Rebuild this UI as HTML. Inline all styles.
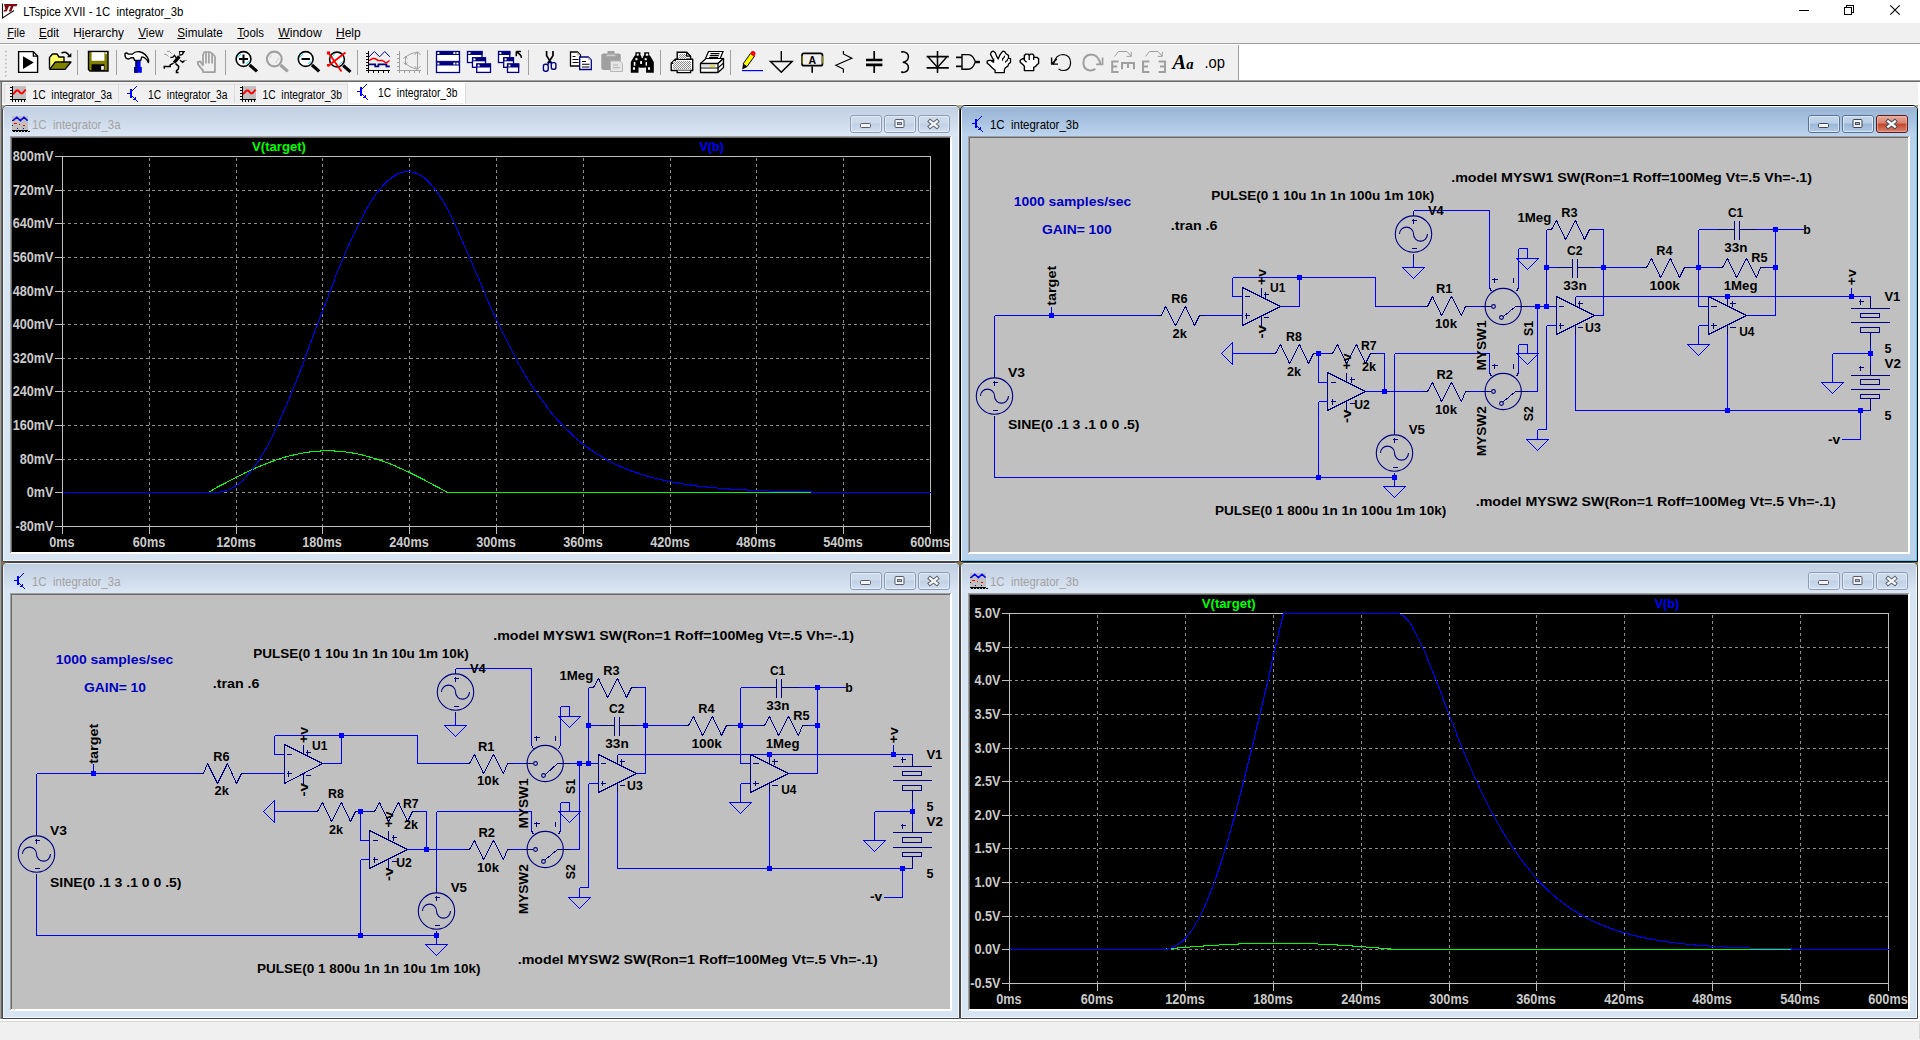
<!DOCTYPE html>
<html><head><meta charset="utf-8"><title>LTspice XVII - 1C integrator_3b</title><style>html,body{margin:0;padding:0;background:#f0f0f0;overflow:hidden}svg{display:block}</style></head><body><svg width="1920" height="1040" viewBox="0 0 1920 1040" font-family="'Liberation Sans', sans-serif">
<defs>
<linearGradient id="gtA" x1="0" y1="0" x2="0" y2="1"><stop offset="0" stop-color="#98b3d4"/><stop offset=".45" stop-color="#a6c0df"/><stop offset="1" stop-color="#bdd4ee"/></linearGradient>
<linearGradient id="gtI" x1="0" y1="0" x2="0" y2="1"><stop offset="0" stop-color="#c0cfe0"/><stop offset=".5" stop-color="#cddaea"/><stop offset="1" stop-color="#dbe7f5"/></linearGradient>
<linearGradient id="gbtnA" x1="0" y1="0" x2="0" y2="1"><stop offset="0" stop-color="#c3d6ec"/><stop offset=".45" stop-color="#b9cfe8"/><stop offset=".5" stop-color="#9bb6d6"/><stop offset="1" stop-color="#b4cce8"/></linearGradient>
<linearGradient id="gbtnI" x1="0" y1="0" x2="0" y2="1"><stop offset="0" stop-color="#cedbea"/><stop offset=".45" stop-color="#cbd9ea"/><stop offset=".5" stop-color="#c0d0e4"/><stop offset="1" stop-color="#d3e0ef"/></linearGradient>
<linearGradient id="gclose" x1="0" y1="0" x2="0" y2="1"><stop offset="0" stop-color="#ecaea0"/><stop offset=".45" stop-color="#d8806c"/><stop offset=".5" stop-color="#c4442a"/><stop offset="1" stop-color="#d88874"/></linearGradient>
</defs>
<rect x="0" y="0" width="1920" height="1040" fill="#f0f0f0"/>
<rect x="0" y="0" width="1920" height="23" fill="#ffffff"/>
<path d="M2.5 3.5v14.5l11.5 -7.5" fill="none" stroke="#111" stroke-width="1.1"/>
<path d="M4 4h13.5l-1 2.2h-3l-2.2 5.3h-2.6l2.2 -5.3h-2l-2.2 5.3h-3.3l.8 -1.8h1.2z" fill="#7a0c14"/>
<text x="23.3" y="16.3" font-size="13" fill="#000" textLength="160" lengthAdjust="spacingAndGlyphs" xml:space="preserve">LTspice XVII - 1C  integrator_3b</text>
<g stroke="#000" fill="none" stroke-width="1" shape-rendering="crispEdges"><path d="M1799 10.5h10"/><path d="M1844.5 7.5h7v7h-7z"/><path d="M1846.5 7.5v-2h7v7h-2"/></g>
<path d="M1890.3 5.3l9.4 9.4m0 -9.4l-9.4 9.4" stroke="#000" stroke-width="1.1" fill="none"/>
<text x="7.3" y="36.5" font-size="12" fill="#000" textLength="17.7" lengthAdjust="spacingAndGlyphs">File</text>
<rect x="7.3" y="38" width="6.71" height="1" fill="#000"/>
<text x="39" y="36.5" font-size="12" fill="#000" textLength="20" lengthAdjust="spacingAndGlyphs">Edit</text>
<rect x="39" y="38" width="7.74" height="1" fill="#000"/>
<text x="73.3" y="36.5" font-size="12" fill="#000" textLength="50.7" lengthAdjust="spacingAndGlyphs">Hierarchy</text>
<rect x="81.86" y="38" width="2.63" height="1" fill="#000"/>
<text x="138.3" y="36.5" font-size="12" fill="#000" textLength="25" lengthAdjust="spacingAndGlyphs">View</text>
<rect x="138.3" y="38" width="7.76" height="1" fill="#000"/>
<text x="177.3" y="36.5" font-size="12" fill="#000" textLength="45.4" lengthAdjust="spacingAndGlyphs">Simulate</text>
<rect x="177.3" y="38" width="7.78" height="1" fill="#000"/>
<text x="237.3" y="36.5" font-size="12" fill="#000" textLength="26.7" lengthAdjust="spacingAndGlyphs">Tools</text>
<rect x="237.3" y="38" width="6.99" height="1" fill="#000"/>
<text x="278.3" y="36.5" font-size="12" fill="#000" textLength="43.4" lengthAdjust="spacingAndGlyphs">Window</text>
<rect x="278.3" y="38" width="11.52" height="1" fill="#000"/>
<text x="336" y="36.5" font-size="12" fill="#000" textLength="24.7" lengthAdjust="spacingAndGlyphs">Help</text>
<rect x="336" y="38" width="8.67" height="1" fill="#000"/>
<rect x="0" y="43" width="1920" height="1" fill="#a0a0a0"/>
<rect x="0" y="44" width="1920" height="1" fill="#ffffff"/>
<rect x="1239" y="44" width="681" height="36" fill="#ffffff"/>
<rect x="1238" y="45" width="1" height="35" fill="#a0a0a0"/>
<rect x="0" y="80" width="1920" height="1" fill="#a0a0a0"/>
<rect x="0" y="81" width="1920" height="1" fill="#696969"/>
<path d="M5 52.2l1.6 -1.4" stroke="#b8b8b8" stroke-width="1.2"/>
<path d="M5 56.25l1.6 -1.4" stroke="#b8b8b8" stroke-width="1.2"/>
<path d="M5 60.3l1.6 -1.4" stroke="#b8b8b8" stroke-width="1.2"/>
<path d="M5 64.35l1.6 -1.4" stroke="#b8b8b8" stroke-width="1.2"/>
<path d="M5 68.4l1.6 -1.4" stroke="#b8b8b8" stroke-width="1.2"/>
<path d="M5 72.45l1.6 -1.4" stroke="#b8b8b8" stroke-width="1.2"/>
<path d="M5 76.5l1.6 -1.4" stroke="#b8b8b8" stroke-width="1.2"/>
<defs><pattern id="dots" width="2" height="2" patternUnits="userSpaceOnUse"><rect width="2" height="2" fill="#fff"/><rect width="1" height="1" fill="#8c8c8c"/><rect x="1" y="1" width="1" height="1" fill="#8c8c8c"/></pattern></defs><rect x="77" y="50" width="1" height="25" fill="#a0a0a0"/><rect x="116" y="50" width="1" height="25" fill="#a0a0a0"/><rect x="155" y="50" width="1" height="25" fill="#a0a0a0"/><rect x="225" y="50" width="1" height="25" fill="#a0a0a0"/><rect x="357" y="50" width="1" height="25" fill="#a0a0a0"/><rect x="427" y="50" width="1" height="25" fill="#a0a0a0"/><rect x="528" y="50" width="1" height="25" fill="#a0a0a0"/><rect x="660" y="50" width="1" height="25" fill="#a0a0a0"/><rect x="730" y="50" width="1" height="25" fill="#a0a0a0"/><path d="M18.6 51.6h14.6l4.4 4.4v16.4h-19z" fill="#fff" stroke="#000" stroke-width="1.4"/><path d="M33.3 51.8v4.4h4.4" fill="none" stroke="#000" stroke-width="1.2"/><path d="M23 56.2l10.8 6.2l-10.8 6.6z" fill="#000"/><path d="M49.5 68.5v-11l3 -3.5h4.5l2 3h5v5" fill="#ffff66" stroke="#000" stroke-width="1.4" stroke-linejoin="round"/><path d="M49.7 69.3l5.6 -7.3h15.7l-5.9 7.3z" fill="#808000" stroke="#000" stroke-width="1.3" stroke-linejoin="round"/><path d="M61.5 53q5 -2.6 8 3.2" fill="none" stroke="#000" stroke-width="1.5"/><path d="M71.3 53v4.2h-4.4z" fill="#000"/><path d="M88.5 51.5h19.5v19.5h-18l-1.5 -1.5z" fill="#808000" stroke="#000" stroke-width="1.4"/><rect x="91.6" y="52.2" width="12.8" height="8.6" fill="#fff"/><rect x="105.3" y="52.3" width="1.6" height="1.6" fill="#fff"/><rect x="91.6" y="64.3" width="12.8" height="6.4" fill="#000"/><rect x="101.2" y="66" width="2.6" height="3.8" fill="#fff"/><path d="M134.2 67v5.8h7.6v-5.8h-1.2v-7h-5.2v7z" fill="#0000ff"/><path d="M134.2 67v5.8h3.4v-12.8h-2.2v7z" fill="#000080"/><path d="M125 53.5q1.5 -1.2 3.2 .6h4.2q2.5 -3 7 -2.4q7 1.4 9.2 8.6q.2 1.6 -.3 2.2q-2.2 -5.2 -6.6 -5.6l-1 3.5h-6l-1.2 -2.6h-2.6q-2.6 2.2 -5 .2q-1.2 -2.6 -.9 -4.5z" fill="#fff" stroke="#000" stroke-width="1.4" stroke-linejoin="round"/><path d="M179 51.1h6.2l-2.4 3.9l-3.4 .9z" fill="#000"/><rect x="180.1" y="52.1" width="2.1" height="2" fill="#fff"/><path d="M179.4 56.4L174 62.8" fill="none" stroke="#000" stroke-width="3.3"/><path d="M176.3 57.8L174.5 55.4L172.9 57.2L170.4 57.6M180 60.2L182.6 62.3L184.6 60.4" fill="none" stroke="#000" stroke-width="1.4" stroke-linejoin="miter"/><path d="M184.6 60.4H186.8" fill="none" stroke="#909090" stroke-width="1"/><path d="M173.6 63.2L170.2 64.9V66.5H164.3V68.8M175.6 63.6L178.7 66.4L178.4 69L176.5 70.7V72.4H178.6" fill="none" stroke="#000" stroke-width="1.5" stroke-linejoin="miter"/><path d="M167.1 51.3h2.3l2.2 2.3M164.2 54.3h1.9l2.3 2.3" fill="none" stroke="#909090" stroke-width="1"/><path d="M203 54.6V65.4M206 51.8V63.6M208.9 51.8V63.6M212.1 53.6V63.6M215 56.2V70" fill="none" stroke="#a0a0a0" stroke-width="1.7"/><path d="M203 55l1.2 -3h5.6l3 1.8l2.2 2.6" fill="none" stroke="#a0a0a0" stroke-width="1.5"/><path d="M203 65.4L200.3 61.4L197.7 62.2L198 64.2L200.5 67.6L203 70.4V72.1H214.9V69.8" fill="none" stroke="#a0a0a0" stroke-width="1.8" stroke-linejoin="round"/><path d="M249.7 65l7.3 6.4" stroke="#000" stroke-width="3.2" stroke-linecap="butt" fill="none"/><circle cx="243.5" cy="59" r="7.4" fill="#fff" stroke="#000" stroke-width="1.6"/><path d="M237.5 57l3.6 -3M245.7 64l3.6 -3" fill="2.4" stroke="#00e8f0" stroke-width="1"/><path d="M239 59h9M243.5 54.5v9" fill="none" stroke="#000" stroke-width="2"/><path d="M280.5 65l7.3 6.4" stroke="#a0a0a0" stroke-width="3.2" stroke-linecap="butt" fill="none"/><circle cx="274.3" cy="59" r="7.4" fill="#f0f0f0" stroke="#a0a0a0" stroke-width="2.1"/><path d="M275.7 63l3.4 -5.4M269.7 58l1.6 -2.6" fill="1.2" stroke="#c8c8c8" stroke-width="1"/><path d="M311.9 65l7.3 6.4" stroke="#000" stroke-width="3.2" stroke-linecap="butt" fill="none"/><circle cx="305.7" cy="59" r="7.4" fill="#fff" stroke="#000" stroke-width="1.6"/><path d="M299.7 57l3.6 -3M307.9 64l3.6 -3" fill="2.4" stroke="#00e8f0" stroke-width="1"/><path d="M301.5 59h8.4" fill="none" stroke="#000" stroke-width="2"/><path d="M343.2 65.5l7.3 6.4" stroke="#000" stroke-width="3.2" stroke-linecap="butt" fill="none"/><circle cx="337" cy="59.5" r="7.4" fill="#fff" stroke="#000" stroke-width="1.6"/><path d="M331 57.5l3.6 -3M339.2 64.5l3.6 -3" fill="2.4" stroke="#00e8f0" stroke-width="1"/><path d="M328 52l13.5 19.5M345.5 52.5l-17.5 13.5" fill="none" stroke="#ff0000" stroke-width="1.8"/><rect x="327" y="51.5" width="3" height="3" fill="#ff0000"/><rect x="327" y="64" width="2.5" height="2.5" fill="#ff0000"/><g shape-rendering="crispEdges"><path d="M368.5 51v22M366 70.5h24" fill="none" stroke="#000" stroke-width="1.4"/><path d="M366 53.5h2M366 56.5h2M366 59.5h2M366 62.5h2M366 65.5h2M366 68.5h2M373.5 71v2M378.5 71v2M383.5 71v2M388.5 71v2" fill="none" stroke="#000" stroke-width="1"/></g><path d="M369 56.8l5.4 -5.3l5.2 5.3l5.2 -5.3l5 5.3" fill="none" stroke="#000080" stroke-width="1"/><path d="M369 60.7l3.5 -2.1h2.6l3 1.9h4.4l3 2.1h1.4l2.6 -2.1" fill="none" stroke="#ff0000" stroke-width="1.5" stroke-linejoin="round"/><path d="M369 64.4h6.2v2h3.2v-2h8v2h3.4" fill="none" stroke="#000080" stroke-width="1.7"/><g shape-rendering="crispEdges"><path d="M399.5 51v22M397 70.5h24" fill="none" stroke="#a0a0a0" stroke-width="1.4"/><path d="M397 54.5h2M397 58.5h2M397 62.5h2M397 66.5h2M404.5 71v2M409.5 71v2M414.5 71v2M419.5 71v2" fill="none" stroke="#a0a0a0" stroke-width="1"/></g><path d="M417.5 52v17M414.5 55l3 -3.3l3 3.3M414.5 66l3 3.3l3 -3.3" fill="none" stroke="#a0a0a0" stroke-width="1"/><path d="M417 52.3q-8.5 1.2 -11.8 5.6M405.2 63.4q3.6 3.6 11.8 6" fill="none" stroke="#a0a0a0" stroke-width="1"/><path d="M405.5 56.5v8M403.6 58.6l1.9 -2.2l1.9 2.2M403.6 62.4l1.9 2.2l1.9 -2.2" fill="none" stroke="#a0a0a0" stroke-width="1"/><rect x="436" y="51" width="24" height="11" fill="#fff"/><rect x="436" y="51" width="24" height="4" fill="#000080"/><rect x="436.5" y="51.5" width="23" height="10" fill="none" stroke="#000080" stroke-width="1.3"/><rect x="437.4" y="52.1" width="2" height="1.9" fill="#fff"/><rect x="436" y="61.5" width="24" height="11.5" fill="#fff"/><rect x="436" y="61.5" width="24" height="4" fill="#000080"/><rect x="436.5" y="62" width="23" height="10.5" fill="none" stroke="#000080" stroke-width="1.3"/><rect x="437.4" y="62.6" width="2" height="1.9" fill="#fff"/><rect x="453.4" y="52.1" width="2" height="1.9" fill="#fff"/><rect x="456.4" y="52.1" width="2" height="1.9" fill="#fff"/><rect x="453.4" y="62.6" width="2" height="1.9" fill="#fff"/><rect x="456.4" y="62.6" width="2" height="1.9" fill="#fff"/><rect x="467" y="51" width="15.5" height="12" fill="#fff"/><rect x="467" y="51" width="15.5" height="4" fill="#000080"/><rect x="467.5" y="51.5" width="14.5" height="11" fill="none" stroke="#000080" stroke-width="1.3"/><rect x="468.4" y="52.1" width="2" height="1.9" fill="#fff"/><rect x="472" y="57.3" width="14" height="10.5" fill="#fff"/><rect x="472" y="57.3" width="14" height="4" fill="#000080"/><rect x="472.5" y="57.8" width="13" height="9.5" fill="none" stroke="#000080" stroke-width="1.3"/><rect x="473.4" y="58.4" width="2" height="1.9" fill="#fff"/><rect x="476.2" y="63.5" width="14.8" height="9.4" fill="#fff"/><rect x="476.2" y="63.5" width="14.8" height="4" fill="#000080"/><rect x="476.7" y="64" width="13.8" height="8.4" fill="none" stroke="#000080" stroke-width="1.3"/><rect x="477.6" y="64.6" width="2" height="1.9" fill="#fff"/><rect x="498" y="51" width="12.3" height="12" fill="#fff"/><rect x="498" y="51" width="12.3" height="4" fill="#000080"/><rect x="498.5" y="51.5" width="11.3" height="11" fill="none" stroke="#000080" stroke-width="1.3"/><rect x="499.4" y="52.1" width="2" height="1.9" fill="#fff"/><rect x="503.2" y="57.3" width="10.8" height="10.5" fill="#fff"/><rect x="503.2" y="57.3" width="10.8" height="4" fill="#000080"/><rect x="503.7" y="57.8" width="9.8" height="9.5" fill="none" stroke="#000080" stroke-width="1.3"/><rect x="504.6" y="58.4" width="2" height="1.9" fill="#fff"/><rect x="507" y="63.5" width="12.2" height="9.4" fill="#fff"/><rect x="507" y="63.5" width="12.2" height="4" fill="#000080"/><rect x="507.5" y="64" width="11.2" height="8.4" fill="none" stroke="#000080" stroke-width="1.3"/><rect x="508.4" y="64.6" width="2" height="1.9" fill="#fff"/><path d="M516.3 51.6h4.6M516.3 51.4v4.8M516.6 51.8l3.2 2.6q1.8 1.6 1.6 3.6" fill="none" stroke="#000" stroke-width="1.5"/><path d="M546.6 51v4.6l2.9 4.8l2.3 3M553 51v4.6l-3.4 5.2l-2 2.6" fill="none" stroke="#000" stroke-width="1.7" stroke-linejoin="round"/><rect x="543.4" y="64.2" width="4.8" height="7" rx="2" fill="none" stroke="#000080" stroke-width="1.4"/><rect x="551.3" y="62.6" width="4.6" height="6.6" rx="1.8" fill="none" stroke="#000080" stroke-width="1.4"/><path d="M548.6 61.5v3M551 61.5v2" fill="none" stroke="#000080" stroke-width="1.3"/><path d="M570.5 52h7l3 3v11h-10z" fill="#fff" stroke="#000" stroke-width="1.3"/><path d="M577.3 52v3.2h3.2z" fill="#b0b0a0"/><path d="M572.5 56.5h3M572.5 59.5h6M572.5 62.5h6" fill="none" stroke="#000" stroke-width="1"/><path d="M579.7 57h8.6l3 3v9.5h-11.6z" fill="#fff" stroke="#000080" stroke-width="1.3"/><path d="M588.3 57v3.2h3.2z" fill="#b0b0a0"/><path d="M582 61.5h4M582 64.3h7.5M582 67h7.5" fill="none" stroke="#000" stroke-width="1.1"/><rect x="601.3" y="53.5" width="19.5" height="16.5" rx="2" fill="#a0a0a0"/><rect x="607.5" y="51" width="7" height="3.6" fill="#a0a0a0"/><path d="M606 56.2h10l-1.6 -1.6h-6.8z" fill="#d0d0d0"/><path d="M610.5 61h9.5l2.5 2.5v8h-12z" fill="#e6e6e6" stroke="#b8b8b8" stroke-width="1"/><path d="M613 65h5M613 67.7h7" fill="none" stroke="#b0b0b0" stroke-width="1"/><path d="M635.4 52.3h5v2.7l1.1 1.5l.8 5.5v5.5h-3.8v5.25h-7.7v-10.75l3.2 -5.5l1.4 -1.5z" fill="#000"/><path d="M649.2 52.3h-5v2.7l-1.1 1.5l-.8 5.5v5.5h3.8v5.25h7.7v-10.75l-3.2 -5.5l-1.4 -1.5z" fill="#000"/><rect x="640" y="58" width="4.6" height="9.5" fill="#000"/><rect x="636.7" y="53.6" width="2" height="2.1" fill="#fff"/><rect x="635.4" y="58.2" width="2.1" height="2" fill="#fff"/><rect x="633.75" y="62" width="1.6" height="3.7" fill="#fff"/><rect x="632.9" y="67.3" width="2.1" height="2.5" fill="#fff"/><rect x="640.2" y="61" width="1.8" height="3" fill="#fff"/><rect x="645.8" y="53.6" width="2.4" height="2.1" fill="#fff"/><rect x="644.6" y="58.2" width="2.1" height="2" fill="#fff"/><rect x="645.6" y="62" width="1.4" height="3.7" fill="#fff"/><rect x="648" y="67.3" width="2.1" height="2.5" fill="#fff"/><path d="M677.2 59.3v-7h9.5l3.9 3.9v3.1" fill="#fff" stroke="#000" stroke-width="1.4"/><path d="M686.7 52.3v3.9h3.9" fill="none" stroke="#000" stroke-width="1.2"/><path d="M671.2 63.3l4.1 -4h17.4v11.2h-21.5z" fill="#fff" stroke="#000" stroke-width="1.4" stroke-linejoin="round"/><path d="M675.3 59.3v4h-4.1" fill="none" stroke="#000" stroke-width="1.2"/><path d="M677.2 70.5v2.1h13.4v-2.1" fill="#fff" stroke="#000" stroke-width="1.4"/><rect x="673" y="61" width="18" height="8" fill="url(#dots)"/><rect x="679" y="54" width="7" height="5" fill="url(#dots)"/><path d="M705.5 58.5l3 -7h14.5l-2.8 7" fill="#fff" stroke="#000" stroke-width="1.2"/><path d="M710.5 53.6h9M709.8 55.6h9M709 57.6h9" fill="none" stroke="#000" stroke-width="1.2"/><path d="M700.5 63.5l5.5 -5h17.5l-5.5 5z" fill="#fff" stroke="#000" stroke-width="1.2" stroke-linejoin="round"/><path d="M700.5 63.5h17.5v9h-17.5zM718 63.5l5.5 -5v9l-5.5 5" fill="#fff" stroke="#000" stroke-width="1.3" stroke-linejoin="round"/><path d="M700.5 68h17.5l5.5 -5" fill="none" stroke="#000" stroke-width="1.1"/><rect x="702" y="65" width="14" height="2.2" fill="#e0e0e0"/><rect x="710" y="65.3" width="5" height="1.5" fill="#e8e000"/><path d="M743 64l7.5 -10.5l4 2.6l-7.5 10.5z" fill="#ffff00" stroke="#000" stroke-width="1"/><path d="M750 53.5l1.6 -2.2q2 -.8 3.4 .6q1 1.4 .2 3l-1.4 1.6z" fill="#ff0000"/><path d="M743 64l-.8 5.5l5 -2.6z" fill="#000"/><rect x="742" y="70" width="21" height="1.2" fill="#0000ff"/><path d="M781.3 51v10.5" fill="none" stroke="#000" stroke-width="1.4"/><path d="M770.5 61.6h21.6l-10.8 10.6z" fill="none" stroke="#000" stroke-width="1.5" stroke-linejoin="miter"/><rect x="802" y="53.3" width="20.5" height="12.4" rx="2" fill="#f0f0f0" stroke="#000" stroke-width="1.7"/><path d="M802.2 56v7.5M822.4 56v7.5" fill="none" stroke="#808000" stroke-width="1.2"/><text x="812.2" y="64" font-size="10.5" fill="#000" font-weight="bold" text-anchor="middle">A</text><path d="M812.2 66.5v6.2" fill="none" stroke="#000" stroke-width="1.6"/><path d="M843.4 51v3l8.4 4.2l-16 7l7.6 3.8v3.8" fill="none" stroke="#000" stroke-width="1.2"/><path d="M874.2 51v8M874.2 66v7" fill="none" stroke="#000" stroke-width="1.7"/><path d="M866 60h16.4M866 64.9h16.4" fill="none" stroke="#000" stroke-width="2.6"/><path d="M902 51.6q6.6 .6 6.4 5.4q-.2 4.6 -5.6 5.2q5.6 .8 5.6 5.2q0 4.6 -6.4 5.2" fill="none" stroke="#000" stroke-width="1.5"/><path d="M902 51v1.8M902 71.2v1.8" fill="none" stroke="#000" stroke-width="1.6"/><path d="M937.5 51v22" fill="none" stroke="#000" stroke-width="1.6"/><path d="M926.6 56.6h22.2M926.6 67.8h22.2" fill="none" stroke="#000" stroke-width="1.7"/><path d="M928.2 57l9.3 10.4l9.3 -10.4" fill="none" stroke="#000" stroke-width="1.4"/><path d="M956 57.4h6M956 66.4h6" fill="none" stroke="#000" stroke-width="1.6"/><path d="M962 54.6h6.5q4.5 .3 6.8 7.3q-2.3 7 -6.8 7.3h-6.5z" fill="none" stroke="#000" stroke-width="1.4"/><path d="M975.3 62h4.6" fill="none" stroke="#000" stroke-width="2.4"/><path d="M995.1 72.7L995.1 70.3L992.4 68L989.2 64.8L987.2 63.2L987.2 61.2L989.2 60.3L991.4 60.4L993 61.9L993.7 60.3L992.1 57.4L990.5 54.1L991.4 51.9L993.4 51.2L995.3 52.8L996.6 56.4L998.2 59L999.5 55.7L1001.4 52.8L1003 51.2L1004.7 51.6L1006 53.8L1008.5 55.4L1008.5 58.3L1010.5 58.7L1010.5 62.5L1008.5 64.1L1007.9 66.1L1005.3 67.7L1004.3 70L1004.3 72.7z" fill="#fff" stroke="#000" stroke-width="1.3" stroke-linejoin="round"/><path d="M1004.7 55.7L1004 57.7L1002.7 58.7L1002.4 60.6M1007.6 58.7L1007.2 60.6L1005.6 61.6L1005.3 62.5M992 61.3l1.6 -1.4v2.2z" fill="none" stroke="#000" stroke-width="1.2"/><path d="M1024.4 70.6L1024.4 66.4L1023.1 64.8L1020.2 62.2L1020.2 60.3L1022.4 58.7L1024.4 58.7L1024.4 55.4L1026 54.1L1028.2 54.1L1029.2 55.4L1030.5 54.1L1032.8 54.1L1033.9 55.75L1033.9 57.4L1037 57.4L1038.6 58.7L1038.6 63.5L1037 64.8L1035.3 66.7L1033.7 67.4L1033.7 70.6z" fill="#fff" stroke="#000" stroke-width="1.4" stroke-linejoin="round"/><path d="M1024.4 58.7V60.3L1026.6 62.2M1029.2 55.4V60M1033.7 57.4V60" fill="none" stroke="#000" stroke-width="1.3"/><path d="M1022.2 58.8l2.2 -1.2v1.6z" fill="#000" stroke="#000" stroke-width="0.6"/><path d="M1053.5 64.5q2 -10 9.5 -10q7.6 .6 7.6 8.6q-.4 6.6 -6.6 7.4q-3 .2 -5.4 -1.6" fill="none" stroke="#000" stroke-width="1.2"/><path d="M1051.6 57.5v6.6h6.4M1051.8 64l5 -5" fill="none" stroke="#000" stroke-width="1.4"/><path d="M1100.5 64.5q-2 -10 -9.5 -10q-7.6 .6 -7.6 8.6q.4 6.6 6.6 7.4q3 .2 5.4 -1.6" fill="none" stroke="#a0a0a0" stroke-width="2"/><path d="M1102.6 57.5v6.8h-6.6" fill="none" stroke="#a0a0a0" stroke-width="1.7"/><path d="M1118.6 61.6h-6.4v10.4h6.4M1112.2 66.6h5" fill="none" stroke="#a0a0a0" stroke-width="2"/><path d="M1122 69.3v-6.4h12v6.4M1128 63v5" fill="none" stroke="#a0a0a0" stroke-width="2"/><path d="M1114.5 56.5l4 -5h8.5l4 4.5M1131.3 51.8v4.6h-4.6" fill="none" stroke="#a0a0a0" stroke-width="1"/><path d="M1149.4 61.6h-6.4v10.4h6.4M1143 66.6h5" fill="none" stroke="#a0a0a0" stroke-width="2"/><path d="M1158.6 61.6h6.4v10.4h-6.4M1165 66.6h-5" fill="none" stroke="#a0a0a0" stroke-width="2"/><path d="M1145.5 56.5l4 -5h8.5l4 4.5M1162.3 51.8v4.6h-4.6" fill="none" stroke="#a0a0a0" stroke-width="1"/><text x="1172.5" y="69.3" font-family="'Liberation Serif', serif" font-style="italic" font-weight="bold" font-size="21" textLength="21" lengthAdjust="spacingAndGlyphs">A<tspan font-size="15">a</tspan></text><text x="1204.5" y="68.2" font-size="16" fill="#000" textLength="20.5" lengthAdjust="spacingAndGlyphs">.op</text>
<rect x="2" y="104" width="1916" height="1" fill="#ffffff"/>
<rect x="4" y="84" width="343" height="1" fill="#e2e2e2"/>
<rect x="4" y="84" width="1" height="19" fill="#dadada"/>
<rect x="13" y="86" width="13" height="13" fill="#c0c0c0"/><g fill="#000" shape-rendering="crispEdges"><rect x="12" y="86" width="1" height="16"/><rect x="10" y="99" width="16" height="1"/><rect x="10" y="87" width="2" height="1"/><rect x="10" y="90" width="2" height="1"/><rect x="10" y="93" width="2" height="1"/><rect x="10" y="96" width="2" height="1"/><rect x="15" y="100" width="1" height="2"/><rect x="18" y="100" width="1" height="2"/><rect x="21" y="100" width="1" height="2"/><rect x="24" y="100" width="1" height="2"/></g><path stroke="#ff0000" stroke-width="1.9" fill="none" stroke-linejoin="round" d="M12.9 94.3l3.6 -3.8h1.7l2.4 2.7h1.9l3.2 -3.5"/>
<text x="32.5" y="99" font-size="12.5" fill="#000" textLength="79.5" lengthAdjust="spacingAndGlyphs" xml:space="preserve">1C  integrator_3a</text>
<rect x="118" y="84" width="1" height="19" fill="#dadada"/>
<g fill="#0000ff" shape-rendering="crispEdges"><rect x="127" y="93" width="3" height="1"/><rect x="130" y="89" width="2" height="9"/><rect x="132" y="90" width="1" height="1"/><rect x="133" y="89" width="1" height="1"/><rect x="134" y="88" width="1" height="1"/><rect x="135" y="87" width="1" height="1"/><rect x="136" y="86" width="1" height="1"/><rect x="132" y="96" width="1" height="1"/><rect x="133" y="97" width="1" height="1"/><rect x="134" y="98" width="1" height="1"/><rect x="135" y="99" width="1" height="1"/><rect x="136" y="100" width="1" height="1"/><rect x="137" y="101" width="1" height="1"/><rect x="133" y="99" width="3" height="1"/><rect x="135" y="97" width="1" height="2"/></g>
<text x="148" y="99" font-size="12.5" fill="#000" textLength="79.5" lengthAdjust="spacingAndGlyphs" xml:space="preserve">1C  integrator_3a</text>
<rect x="234" y="84" width="1" height="19" fill="#dadada"/>
<rect x="243" y="86" width="13" height="13" fill="#c0c0c0"/><g fill="#000" shape-rendering="crispEdges"><rect x="242" y="86" width="1" height="16"/><rect x="240" y="99" width="16" height="1"/><rect x="240" y="87" width="2" height="1"/><rect x="240" y="90" width="2" height="1"/><rect x="240" y="93" width="2" height="1"/><rect x="240" y="96" width="2" height="1"/><rect x="245" y="100" width="1" height="2"/><rect x="248" y="100" width="1" height="2"/><rect x="251" y="100" width="1" height="2"/><rect x="254" y="100" width="1" height="2"/></g><path stroke="#ff0000" stroke-width="1.9" fill="none" stroke-linejoin="round" d="M242.9 94.3l3.6 -3.8h1.7l2.4 2.7h1.9l3.2 -3.5"/>
<text x="262.5" y="99" font-size="12.5" fill="#000" textLength="79.5" lengthAdjust="spacingAndGlyphs" xml:space="preserve">1C  integrator_3b</text>
<rect x="347" y="82" width="119" height="21" fill="#ffffff"/>
<rect x="347" y="83" width="1" height="20" fill="#dcdcdc"/>
<rect x="465" y="83" width="1" height="20" fill="#dcdcdc"/>
<g fill="#0000ff" shape-rendering="crispEdges"><rect x="357" y="91" width="3" height="1"/><rect x="360" y="87" width="2" height="9"/><rect x="362" y="88" width="1" height="1"/><rect x="363" y="87" width="1" height="1"/><rect x="364" y="86" width="1" height="1"/><rect x="365" y="85" width="1" height="1"/><rect x="366" y="84" width="1" height="1"/><rect x="362" y="94" width="1" height="1"/><rect x="363" y="95" width="1" height="1"/><rect x="364" y="96" width="1" height="1"/><rect x="365" y="97" width="1" height="1"/><rect x="366" y="98" width="1" height="1"/><rect x="367" y="99" width="1" height="1"/><rect x="363" y="97" width="3" height="1"/><rect x="365" y="95" width="1" height="2"/></g>
<text x="378" y="97" font-size="12.5" fill="#000" textLength="79.5" lengthAdjust="spacingAndGlyphs" xml:space="preserve">1C  integrator_3b</text>
<rect x="0" y="1019" width="1920" height="2" fill="#ffffff"/>
<rect x="0" y="1021" width="1920" height="1" fill="#d7d7d7"/>
<rect x="1919" y="1023" width="1" height="16" fill="#d7d7d7"/>
<rect x="0" y="82" width="1" height="937" fill="#a0a0a0"/>
<rect x="1" y="82" width="1" height="937" fill="#696969"/>
<rect x="1918" y="82" width="2" height="939" fill="#ffffff"/>
<rect x="2" y="105" width="1916" height="6" fill="#b5ab8e"/>
<rect x="2" y="562" width="1916" height="6" fill="#8f7445"/>
<path d="M2.5 561.5v-450.5q0 -5.5 5.5 -5.5h946q5.5 0 5.5 5.5v450.5z" fill="#d7e4f2" stroke="#454545"/><path d="M3 136v-26.5q0 -3.5 3.5 -3.5h949q3.5 0 3.5 3.5v26.5z" fill="url(#gtI)"/><path d="M3.5 110V560.5H958.5V110" fill="none" stroke="#f2f6fd" shape-rendering="crispEdges"/><path d="M6 106.5H956" fill="none" stroke="#e8eef8" shape-rendering="crispEdges"/><rect x="10" y="136" width="942" height="418" fill="#ffffff"/><rect x="10" y="136" width="941" height="417" fill="#a0a0a0"/><rect x="11" y="137" width="940" height="416" fill="#ffffff"/><rect x="11" y="137" width="939" height="415" fill="#696969"/><rect x="12" y="138" width="938" height="414" fill="#000"/><rect x="12" y="116" width="16" height="16" fill="#c0c0c0"/><path stroke="#0000ff" stroke-width="1.5" fill="none" d="M13 120.6l3.8 -3.4l3.6 3.4l3.6 -3.4l3.6 3.4"/><g shape-rendering="crispEdges"><rect x="12" y="120" width="1" height="1" fill="#000"/><rect x="12" y="125" width="1" height="1" fill="#000"/><rect x="14" y="123" width="3" height="1" fill="#ff0000"/><rect x="19" y="124" width="1" height="1" fill="#ff0000"/><rect x="23" y="125" width="2" height="1" fill="#ff0000"/><rect x="17" y="128" width="1" height="1" fill="#0000c0"/><rect x="23" y="128" width="1" height="1" fill="#0000c0"/><rect x="12" y="130" width="16" height="1" fill="#000"/><rect x="13" y="131" width="2" height="1" fill="#000"/><rect x="16" y="131" width="2" height="1" fill="#000"/><rect x="19" y="131" width="2" height="1" fill="#000"/><rect x="22" y="131" width="2" height="1" fill="#000"/><rect x="25" y="131" width="2" height="1" fill="#000"/><rect x="28" y="131" width="2" height="1" fill="#000"/></g><text x="32" y="129" font-size="13" fill="#a3a3a3" textLength="88.5" lengthAdjust="spacingAndGlyphs" xml:space="preserve">1C  integrator_3a</text><rect x="850.5" y="115.5" width="31" height="17" rx="2.5" fill="url(#gbtnI)" stroke="#8c9cb6"/><rect x="851.5" y="116.5" width="29" height="15" rx="1.5" fill="none" stroke="#e6eef8" stroke-opacity=".8"/><rect x="860.5" y="123.5" width="10" height="4" rx="1" fill="#f4f4f4" stroke="#545c6c"/><rect x="884.5" y="115.5" width="31" height="17" rx="2.5" fill="url(#gbtnI)" stroke="#8c9cb6"/><rect x="885.5" y="116.5" width="29" height="15" rx="1.5" fill="none" stroke="#e6eef8" stroke-opacity=".8"/><rect x="895" y="119.5" width="9" height="8" rx="1" fill="#f4f4f4" stroke="#545c6c"/><rect x="897.5" y="122.6" width="4" height="2" fill="#9fb6d2" stroke="#545c6c" stroke-width=".9"/><rect x="918.5" y="115.5" width="31" height="17" rx="2.5" fill="url(#gbtnI)" stroke="#8c9cb6"/><rect x="919.5" y="116.5" width="29" height="15" rx="1.5" fill="none" stroke="#e6eef8" stroke-opacity=".8"/><path d="M930.2 121.4l6.6 5.2m0 -5.2l-6.6 5.2" stroke="#545c6c" stroke-width="4.3" stroke-linecap="square" fill="none"/><path d="M930.2 121.4l6.6 5.2m0 -5.2l-6.6 5.2" stroke="#f4f4f4" stroke-width="2.5" stroke-linecap="square" fill="none"/>
<path d="M2.5 1018.5v-450.5q0 -5.5 5.5 -5.5h946q5.5 0 5.5 5.5v450.5z" fill="#d7e4f2" stroke="#454545"/><path d="M3 593v-26.5q0 -3.5 3.5 -3.5h949q3.5 0 3.5 3.5v26.5z" fill="url(#gtI)"/><path d="M3.5 567V1017.5H958.5V567" fill="none" stroke="#f2f6fd" shape-rendering="crispEdges"/><path d="M6 563.5H956" fill="none" stroke="#e8eef8" shape-rendering="crispEdges"/><rect x="10" y="593" width="942" height="418" fill="#ffffff"/><rect x="10" y="593" width="941" height="417" fill="#a0a0a0"/><rect x="11" y="594" width="940" height="416" fill="#ffffff"/><rect x="11" y="594" width="939" height="415" fill="#696969"/><rect x="12" y="595" width="938" height="414" fill="#c0c0c0"/><g fill="#0000ff" shape-rendering="crispEdges"><rect x="14" y="580" width="3" height="1"/><rect x="17" y="576" width="2" height="9"/><rect x="19" y="577" width="1" height="1"/><rect x="20" y="576" width="1" height="1"/><rect x="21" y="575" width="1" height="1"/><rect x="22" y="574" width="1" height="1"/><rect x="23" y="573" width="1" height="1"/><rect x="19" y="583" width="1" height="1"/><rect x="20" y="584" width="1" height="1"/><rect x="21" y="585" width="1" height="1"/><rect x="22" y="586" width="1" height="1"/><rect x="23" y="587" width="1" height="1"/><rect x="24" y="588" width="1" height="1"/><rect x="20" y="586" width="3" height="1"/><rect x="22" y="584" width="1" height="2"/></g><text x="32" y="586" font-size="13" fill="#a3a3a3" textLength="88.5" lengthAdjust="spacingAndGlyphs" xml:space="preserve">1C  integrator_3a</text><rect x="850.5" y="572.5" width="31" height="17" rx="2.5" fill="url(#gbtnI)" stroke="#8c9cb6"/><rect x="851.5" y="573.5" width="29" height="15" rx="1.5" fill="none" stroke="#e6eef8" stroke-opacity=".8"/><rect x="860.5" y="580.5" width="10" height="4" rx="1" fill="#f4f4f4" stroke="#545c6c"/><rect x="884.5" y="572.5" width="31" height="17" rx="2.5" fill="url(#gbtnI)" stroke="#8c9cb6"/><rect x="885.5" y="573.5" width="29" height="15" rx="1.5" fill="none" stroke="#e6eef8" stroke-opacity=".8"/><rect x="895" y="576.5" width="9" height="8" rx="1" fill="#f4f4f4" stroke="#545c6c"/><rect x="897.5" y="579.6" width="4" height="2" fill="#9fb6d2" stroke="#545c6c" stroke-width=".9"/><rect x="918.5" y="572.5" width="31" height="17" rx="2.5" fill="url(#gbtnI)" stroke="#8c9cb6"/><rect x="919.5" y="573.5" width="29" height="15" rx="1.5" fill="none" stroke="#e6eef8" stroke-opacity=".8"/><path d="M930.2 578.4l6.6 5.2m0 -5.2l-6.6 5.2" stroke="#545c6c" stroke-width="4.3" stroke-linecap="square" fill="none"/><path d="M930.2 578.4l6.6 5.2m0 -5.2l-6.6 5.2" stroke="#f4f4f4" stroke-width="2.5" stroke-linecap="square" fill="none"/>
<path d="M960.5 1018.5v-450.5q0 -5.5 5.5 -5.5h946q5.5 0 5.5 5.5v450.5z" fill="#d7e4f2" stroke="#454545"/><path d="M961 593v-26.5q0 -3.5 3.5 -3.5h949q3.5 0 3.5 3.5v26.5z" fill="url(#gtI)"/><path d="M961.5 567V1017.5H1916.5V567" fill="none" stroke="#f2f6fd" shape-rendering="crispEdges"/><path d="M964 563.5H1914" fill="none" stroke="#e8eef8" shape-rendering="crispEdges"/><rect x="968" y="593" width="942" height="418" fill="#ffffff"/><rect x="968" y="593" width="941" height="417" fill="#a0a0a0"/><rect x="969" y="594" width="940" height="416" fill="#ffffff"/><rect x="969" y="594" width="939" height="415" fill="#696969"/><rect x="970" y="595" width="938" height="414" fill="#000"/><rect x="970" y="573" width="16" height="16" fill="#c0c0c0"/><path stroke="#0000ff" stroke-width="1.5" fill="none" d="M971 577.6l3.8 -3.4l3.6 3.4l3.6 -3.4l3.6 3.4"/><g shape-rendering="crispEdges"><rect x="970" y="577" width="1" height="1" fill="#000"/><rect x="970" y="582" width="1" height="1" fill="#000"/><rect x="972" y="580" width="3" height="1" fill="#ff0000"/><rect x="977" y="581" width="1" height="1" fill="#ff0000"/><rect x="981" y="582" width="2" height="1" fill="#ff0000"/><rect x="975" y="585" width="1" height="1" fill="#0000c0"/><rect x="981" y="585" width="1" height="1" fill="#0000c0"/><rect x="970" y="587" width="16" height="1" fill="#000"/><rect x="971" y="588" width="2" height="1" fill="#000"/><rect x="974" y="588" width="2" height="1" fill="#000"/><rect x="977" y="588" width="2" height="1" fill="#000"/><rect x="980" y="588" width="2" height="1" fill="#000"/><rect x="983" y="588" width="2" height="1" fill="#000"/><rect x="986" y="588" width="2" height="1" fill="#000"/></g><text x="990" y="586" font-size="13" fill="#a3a3a3" textLength="88.5" lengthAdjust="spacingAndGlyphs" xml:space="preserve">1C  integrator_3b</text><rect x="1808.5" y="572.5" width="31" height="17" rx="2.5" fill="url(#gbtnI)" stroke="#8c9cb6"/><rect x="1809.5" y="573.5" width="29" height="15" rx="1.5" fill="none" stroke="#e6eef8" stroke-opacity=".8"/><rect x="1818.5" y="580.5" width="10" height="4" rx="1" fill="#f4f4f4" stroke="#545c6c"/><rect x="1842.5" y="572.5" width="31" height="17" rx="2.5" fill="url(#gbtnI)" stroke="#8c9cb6"/><rect x="1843.5" y="573.5" width="29" height="15" rx="1.5" fill="none" stroke="#e6eef8" stroke-opacity=".8"/><rect x="1853" y="576.5" width="9" height="8" rx="1" fill="#f4f4f4" stroke="#545c6c"/><rect x="1855.5" y="579.6" width="4" height="2" fill="#9fb6d2" stroke="#545c6c" stroke-width=".9"/><rect x="1876.5" y="572.5" width="31" height="17" rx="2.5" fill="url(#gbtnI)" stroke="#8c9cb6"/><rect x="1877.5" y="573.5" width="29" height="15" rx="1.5" fill="none" stroke="#e6eef8" stroke-opacity=".8"/><path d="M1888.2 578.4l6.6 5.2m0 -5.2l-6.6 5.2" stroke="#545c6c" stroke-width="4.3" stroke-linecap="square" fill="none"/><path d="M1888.2 578.4l6.6 5.2m0 -5.2l-6.6 5.2" stroke="#f4f4f4" stroke-width="2.5" stroke-linecap="square" fill="none"/>
<path d="M960.5 561.5v-450.5q0 -5.5 5.5 -5.5h946q5.5 0 5.5 5.5v450.5z" fill="#bad1ec" stroke="#000000"/><path d="M961 136v-26.5q0 -3.5 3.5 -3.5h949q3.5 0 3.5 3.5v26.5z" fill="url(#gtA)"/><path d="M1916.5 111V560.5H961" fill="none" stroke="#3fd4f7" shape-rendering="crispEdges"/><path d="M961.5 110V560.5" fill="none" stroke="#f4f9fe" shape-rendering="crispEdges"/><path d="M964 106.5H1914" fill="none" stroke="#f7fafe" shape-rendering="crispEdges"/><rect x="968" y="136" width="942" height="418" fill="#ffffff"/><rect x="968" y="136" width="941" height="417" fill="#a0a0a0"/><rect x="969" y="137" width="940" height="416" fill="#ffffff"/><rect x="969" y="137" width="939" height="415" fill="#696969"/><rect x="970" y="138" width="938" height="414" fill="#c0c0c0"/><g fill="#0000ff" shape-rendering="crispEdges"><rect x="972" y="123" width="3" height="1"/><rect x="975" y="119" width="2" height="9"/><rect x="977" y="120" width="1" height="1"/><rect x="978" y="119" width="1" height="1"/><rect x="979" y="118" width="1" height="1"/><rect x="980" y="117" width="1" height="1"/><rect x="981" y="116" width="1" height="1"/><rect x="977" y="126" width="1" height="1"/><rect x="978" y="127" width="1" height="1"/><rect x="979" y="128" width="1" height="1"/><rect x="980" y="129" width="1" height="1"/><rect x="981" y="130" width="1" height="1"/><rect x="982" y="131" width="1" height="1"/><rect x="978" y="129" width="3" height="1"/><rect x="980" y="127" width="1" height="2"/></g><text x="990" y="129" font-size="13" fill="#000000" textLength="88.5" lengthAdjust="spacingAndGlyphs" xml:space="preserve">1C  integrator_3b</text><rect x="1808.5" y="115.5" width="31" height="17" rx="2.5" fill="url(#gbtnA)" stroke="#5b6f8e"/><rect x="1809.5" y="116.5" width="29" height="15" rx="1.5" fill="none" stroke="#e6eef8" stroke-opacity=".8"/><rect x="1818.5" y="123.5" width="10" height="4" rx="1" fill="#f4f4f4" stroke="#3c4558"/><rect x="1842.5" y="115.5" width="31" height="17" rx="2.5" fill="url(#gbtnA)" stroke="#5b6f8e"/><rect x="1843.5" y="116.5" width="29" height="15" rx="1.5" fill="none" stroke="#e6eef8" stroke-opacity=".8"/><rect x="1853" y="119.5" width="9" height="8" rx="1" fill="#f4f4f4" stroke="#3c4558"/><rect x="1855.5" y="122.6" width="4" height="2" fill="#9fb6d2" stroke="#3c4558" stroke-width=".9"/><rect x="1876.5" y="115.5" width="31" height="17" rx="2.5" fill="url(#gclose)" stroke="#5a1c1c"/><rect x="1877.5" y="116.5" width="29" height="15" rx="1.5" fill="none" stroke="#f0b8a8" stroke-opacity=".6"/><path d="M1888.2 121.4l6.6 5.2m0 -5.2l-6.6 5.2" stroke="#3c4558" stroke-width="4.3" stroke-linecap="square" fill="none"/><path d="M1888.2 121.4l6.6 5.2m0 -5.2l-6.6 5.2" stroke="#f4f4f4" stroke-width="2.5" stroke-linecap="square" fill="none"/>
<rect x="12" y="138" width="938" height="414" fill="#000"/><g shape-rendering="crispEdges" fill="none" stroke-width="1"><path stroke="#8c8c8c" stroke-dasharray="3 3" d="M149.5 158V527M236.5 158V527M322.5 158V527M409.5 158V527M496.5 158V527M583.5 158V527M670.5 158V527M756.5 158V527M843.5 158V527M62 190.5H931M62 223.5H931M62 257.5H931M62 291.5H931M62 324.5H931M62 358.5H931M62 391.5H931M62 425.5H931M62 459.5H931M62 492.5H931"/><path stroke="#c0c0c0" d="M62.5 156.5H930.5V526.5H62.5ZM62.5 526V534M149.5 526V534M236.5 526V534M322.5 526V534M409.5 526V534M496.5 526V534M583.5 526V534M670.5 526V534M756.5 526V534M843.5 526V534M930.5 526V534M55 156.5H63M55 190.5H63M55 223.5H63M55 257.5H63M55 291.5H63M55 324.5H63M55 358.5H63M55 391.5H63M55 425.5H63M55 459.5H63M55 492.5H63M55 526.5H63"/><polyline stroke="#00ff00" points="62.5,492.5 208.5,492.5 209.5,491.5 210.5,491.5 211.5,490.5 212.5,490.5 212.5,489.5 213.5,489.5 214.5,488.5 215.5,488.5 216.5,487.5 217.5,487.5 217.5,486.5 219.5,486.5 219.5,485.5 221.5,485.5 221.5,484.5 223.5,484.5 223.5,483.5 225.5,483.5 225.5,482.5 226.5,482.5 227.5,481.5 228.5,481.5 229.5,480.5 230.5,480.5 231.5,479.5 232.5,479.5 233.5,478.5 234.5,478.5 235.5,477.5 236.5,477.5 237.5,476.5 238.5,476.5 239.5,475.5 240.5,475.5 241.5,474.5 242.5,474.5 243.5,473.5 244.5,473.5 244.5,472.5 246.5,472.5 247.5,471.5 248.5,471.5 249.5,470.5 250.5,470.5 251.5,469.5 253.5,469.5 253.5,468.5 255.5,468.5 255.5,467.5 257.5,467.5 258.5,466.5 260.5,466.5 260.5,465.5 262.5,465.5 263.5,464.5 265.5,464.5 265.5,463.5 267.5,463.5 268.5,462.5 270.5,462.5 270.5,461.5 273.5,461.5 273.5,460.5 275.5,460.5 276.5,459.5 278.5,459.5 279.5,458.5 281.5,458.5 282.5,457.5 285.5,457.5 285.5,456.5 288.5,456.5 289.5,455.5 293.5,455.5 293.5,454.5 297.5,454.5 298.5,453.5 302.5,453.5 303.5,452.5 309.5,452.5 309.5,451.5 320.5,451.5 320.5,450.5 334.5,450.5 334.5,451.5 345.5,451.5 346.5,452.5 352.5,452.5 352.5,453.5 357.5,453.5 358.5,454.5 362.5,454.5 362.5,455.5 365.5,455.5 366.5,456.5 369.5,456.5 369.5,457.5 372.5,457.5 373.5,458.5 376.5,458.5 376.5,459.5 379.5,459.5 379.5,460.5 382.5,460.5 382.5,461.5 384.5,461.5 385.5,462.5 387.5,462.5 388.5,463.5 390.5,463.5 390.5,464.5 392.5,464.5 393.5,465.5 395.5,465.5 395.5,466.5 396.5,466.5 397.5,467.5 399.5,467.5 399.5,468.5 401.5,468.5 402.5,469.5 403.5,469.5 404.5,470.5 405.5,470.5 406.5,471.5 408.5,471.5 408.5,472.5 410.5,472.5 410.5,473.5 412.5,473.5 412.5,474.5 414.5,474.5 414.5,475.5 416.5,475.5 416.5,476.5 418.5,476.5 418.5,477.5 420.5,477.5 420.5,478.5 422.5,478.5 422.5,479.5 424.5,479.5 424.5,480.5 425.5,480.5 426.5,481.5 427.5,481.5 428.5,482.5 429.5,482.5 430.5,483.5 431.5,483.5 432.5,484.5 433.5,484.5 433.5,485.5 435.5,485.5 435.5,486.5 437.5,486.5 437.5,487.5 439.5,487.5 439.5,488.5 440.5,488.5 441.5,489.5 442.5,489.5 443.5,490.5 444.5,490.5 445.5,491.5 446.5,491.5 447.5,492.5 930.5,492.5"/><polyline stroke="#0000ff" points="62.5,492.5 220.5,492.5 220.5,491.5 224.5,491.5 225.5,490.5 227.5,490.5 228.5,489.5 229.5,489.5 230.5,488.5 231.5,488.5 232.5,487.5 233.5,487.5 234.5,486.5 235.5,486.5 235.5,485.5 236.5,485.5 237.5,484.5 238.5,484.5 238.5,483.5 239.5,483.5 240.5,482.5 241.5,481.5 242.5,480.5 243.5,480.5 243.5,479.5 244.5,478.5 245.5,477.5 246.5,476.5 247.5,475.5 247.5,474.5 248.5,474.5 248.5,473.5 249.5,473.5 249.5,472.5 250.5,472.5 250.5,471.5 251.5,470.5 252.5,469.5 252.5,468.5 253.5,468.5 253.5,467.5 254.5,466.5 255.5,465.5 255.5,464.5 256.5,464.5 256.5,463.5 257.5,462.5 257.5,461.5 258.5,461.5 258.5,460.5 259.5,459.5 259.5,458.5 260.5,458.5 260.5,457.5 261.5,456.5 261.5,455.5 262.5,454.5 263.5,453.5 263.5,452.5 264.5,451.5 264.5,450.5 265.5,449.5 265.5,448.5 266.5,448.5 266.5,447.5 267.5,446.5 267.5,445.5 268.5,444.5 268.5,443.5 269.5,442.5 269.5,441.5 270.5,440.5 270.5,439.5 271.5,438.5 271.5,437.5 272.5,436.5 272.5,435.5 273.5,434.5 273.5,433.5 274.5,432.5 274.5,431.5 274.5,430.5 275.5,429.5 275.5,428.5 276.5,427.5 276.5,426.5 277.5,425.5 277.5,424.5 278.5,423.5 278.5,422.5 279.5,421.5 279.5,420.5 280.5,418.5 280.5,417.5 281.5,416.5 281.5,415.5 282.5,414.5 282.5,413.5 283.5,412.5 283.5,411.5 284.5,409.5 284.5,408.5 285.5,407.5 285.5,406.5 286.5,405.5 286.5,404.5 287.5,403.5 287.5,401.5 288.5,400.5 288.5,399.5 289.5,398.5 289.5,397.5 290.5,395.5 290.5,394.5 291.5,393.5 291.5,392.5 292.5,390.5 292.5,389.5 293.5,388.5 293.5,387.5 294.5,386.5 294.5,384.5 295.5,383.5 295.5,382.5 296.5,381.5 296.5,379.5 297.5,378.5 297.5,377.5 298.5,375.5 298.5,374.5 299.5,373.5 299.5,372.5 300.5,370.5 300.5,369.5 301.5,368.5 301.5,367.5 302.5,365.5 302.5,364.5 303.5,363.5 303.5,361.5 304.5,360.5 304.5,359.5 304.5,357.5 305.5,356.5 305.5,355.5 306.5,353.5 306.5,352.5 307.5,351.5 307.5,350.5 308.5,348.5 308.5,347.5 309.5,346.5 309.5,344.5 310.5,343.5 310.5,342.5 311.5,340.5 311.5,339.5 312.5,338.5 312.5,336.5 313.5,335.5 313.5,334.5 314.5,332.5 314.5,331.5 315.5,330.5 315.5,328.5 316.5,327.5 316.5,326.5 317.5,324.5 317.5,323.5 318.5,322.5 318.5,320.5 319.5,319.5 319.5,318.5 320.5,316.5 320.5,315.5 321.5,314.5 321.5,313.5 322.5,311.5 322.5,310.5 323.5,309.5 323.5,307.5 324.5,306.5 324.5,305.5 325.5,303.5 325.5,302.5 326.5,301.5 326.5,299.5 327.5,298.5 327.5,297.5 328.5,296.5 328.5,294.5 329.5,293.5 329.5,292.5 330.5,290.5 330.5,289.5 331.5,288.5 331.5,287.5 332.5,285.5 332.5,284.5 333.5,283.5 333.5,282.5 334.5,280.5 334.5,279.5 334.5,278.5 335.5,277.5 335.5,275.5 336.5,274.5 336.5,273.5 337.5,272.5 337.5,270.5 338.5,269.5 338.5,268.5 339.5,267.5 339.5,266.5 340.5,264.5 340.5,263.5 341.5,262.5 341.5,261.5 342.5,260.5 342.5,258.5 343.5,257.5 343.5,256.5 344.5,255.5 344.5,254.5 345.5,253.5 345.5,251.5 346.5,250.5 346.5,249.5 347.5,248.5 347.5,247.5 348.5,246.5 348.5,245.5 349.5,243.5 349.5,242.5 350.5,241.5 350.5,240.5 351.5,239.5 351.5,238.5 352.5,237.5 352.5,236.5 353.5,235.5 353.5,234.5 354.5,233.5 354.5,232.5 355.5,231.5 355.5,230.5 356.5,229.5 356.5,228.5 357.5,227.5 357.5,226.5 358.5,225.5 358.5,224.5 359.5,223.5 359.5,222.5 360.5,221.5 360.5,220.5 361.5,219.5 361.5,218.5 362.5,217.5 362.5,216.5 363.5,215.5 363.5,214.5 364.5,213.5 364.5,212.5 364.5,211.5 365.5,211.5 365.5,210.5 366.5,209.5 366.5,208.5 367.5,207.5 367.5,206.5 368.5,206.5 368.5,205.5 369.5,204.5 369.5,203.5 370.5,202.5 371.5,201.5 371.5,200.5 372.5,199.5 372.5,198.5 373.5,198.5 373.5,197.5 374.5,196.5 375.5,195.5 375.5,194.5 376.5,193.5 377.5,192.5 377.5,191.5 378.5,191.5 378.5,190.5 379.5,190.5 379.5,189.5 380.5,188.5 381.5,187.5 382.5,186.5 382.5,185.5 383.5,185.5 383.5,184.5 384.5,184.5 384.5,183.5 385.5,183.5 385.5,182.5 386.5,182.5 386.5,181.5 387.5,181.5 387.5,180.5 388.5,180.5 389.5,179.5 390.5,178.5 391.5,178.5 391.5,177.5 392.5,177.5 392.5,176.5 394.5,176.5 394.5,175.5 395.5,175.5 395.5,174.5 397.5,174.5 397.5,173.5 399.5,173.5 400.5,172.5 403.5,172.5 403.5,171.5 411.5,171.5 412.5,172.5 415.5,172.5 415.5,173.5 417.5,173.5 418.5,174.5 419.5,174.5 420.5,175.5 421.5,175.5 421.5,176.5 422.5,176.5 423.5,177.5 424.5,177.5 424.5,178.5 425.5,178.5 425.5,179.5 426.5,179.5 426.5,180.5 427.5,180.5 427.5,181.5 428.5,181.5 428.5,182.5 429.5,182.5 429.5,183.5 430.5,183.5 430.5,184.5 431.5,184.5 431.5,185.5 432.5,186.5 433.5,187.5 434.5,188.5 434.5,189.5 435.5,189.5 435.5,190.5 436.5,191.5 437.5,192.5 437.5,193.5 438.5,193.5 438.5,194.5 439.5,195.5 439.5,196.5 440.5,196.5 440.5,197.5 441.5,198.5 441.5,199.5 442.5,199.5 442.5,200.5 443.5,201.5 443.5,202.5 444.5,203.5 444.5,204.5 445.5,204.5 445.5,205.5 446.5,206.5 446.5,207.5 447.5,208.5 447.5,209.5 448.5,210.5 448.5,211.5 449.5,212.5 449.5,213.5 450.5,214.5 450.5,215.5 451.5,216.5 451.5,217.5 452.5,218.5 452.5,219.5 453.5,220.5 453.5,221.5 454.5,222.5 454.5,223.5 455.5,224.5 455.5,225.5 455.5,226.5 456.5,227.5 456.5,228.5 457.5,229.5 457.5,230.5 458.5,231.5 458.5,232.5 459.5,234.5 459.5,235.5 460.5,236.5 460.5,237.5 461.5,238.5 461.5,239.5 462.5,240.5 462.5,241.5 463.5,243.5 463.5,244.5 464.5,245.5 464.5,246.5 465.5,247.5 465.5,248.5 466.5,249.5 466.5,251.5 467.5,252.5 467.5,253.5 468.5,254.5 468.5,255.5 469.5,256.5 469.5,258.5 470.5,259.5 470.5,260.5 471.5,261.5 471.5,262.5 472.5,263.5 472.5,265.5 473.5,266.5 473.5,267.5 474.5,268.5 474.5,269.5 475.5,270.5 475.5,272.5 476.5,273.5 476.5,274.5 477.5,275.5 477.5,276.5 478.5,277.5 478.5,278.5 479.5,280.5 479.5,281.5 480.5,282.5 480.5,283.5 481.5,284.5 481.5,285.5 482.5,287.5 482.5,288.5 483.5,289.5 483.5,290.5 484.5,291.5 484.5,292.5 485.5,293.5 485.5,295.5 485.5,296.5 486.5,297.5 486.5,298.5 487.5,299.5 487.5,300.5 488.5,301.5 488.5,302.5 489.5,304.5 489.5,305.5 490.5,306.5 490.5,307.5 491.5,308.5 491.5,309.5 492.5,310.5 492.5,311.5 493.5,312.5 493.5,313.5 494.5,315.5 494.5,316.5 495.5,317.5 495.5,318.5 496.5,319.5 496.5,320.5 497.5,321.5 497.5,322.5 498.5,323.5 498.5,324.5 499.5,325.5 499.5,326.5 500.5,327.5 500.5,328.5 501.5,329.5 501.5,330.5 502.5,331.5 502.5,332.5 503.5,333.5 503.5,334.5 504.5,335.5 504.5,336.5 505.5,337.5 505.5,338.5 506.5,339.5 506.5,340.5 507.5,341.5 507.5,342.5 508.5,343.5 508.5,344.5 509.5,345.5 509.5,346.5 510.5,347.5 510.5,348.5 511.5,349.5 511.5,350.5 512.5,351.5 512.5,352.5 513.5,353.5 513.5,354.5 514.5,355.5 514.5,356.5 515.5,357.5 516.5,358.5 516.5,359.5 516.5,360.5 517.5,361.5 517.5,362.5 518.5,363.5 518.5,364.5 519.5,365.5 520.5,366.5 520.5,367.5 521.5,368.5 521.5,369.5 522.5,370.5 522.5,371.5 523.5,371.5 523.5,372.5 524.5,373.5 524.5,374.5 525.5,375.5 525.5,376.5 526.5,376.5 526.5,377.5 527.5,378.5 527.5,379.5 528.5,380.5 529.5,381.5 529.5,382.5 530.5,383.5 530.5,384.5 531.5,384.5 531.5,385.5 532.5,386.5 532.5,387.5 533.5,387.5 533.5,388.5 534.5,389.5 534.5,390.5 535.5,390.5 535.5,391.5 536.5,392.5 537.5,393.5 537.5,394.5 538.5,395.5 539.5,396.5 539.5,397.5 540.5,397.5 540.5,398.5 541.5,399.5 542.5,400.5 542.5,401.5 543.5,401.5 543.5,402.5 544.5,403.5 545.5,404.5 545.5,405.5 546.5,405.5 546.5,406.5 546.5,407.5 547.5,407.5 547.5,408.5 548.5,409.5 549.5,410.5 550.5,411.5 550.5,412.5 551.5,412.5 551.5,413.5 552.5,413.5 552.5,414.5 553.5,415.5 554.5,416.5 555.5,417.5 556.5,418.5 556.5,419.5 557.5,419.5 557.5,420.5 558.5,420.5 558.5,421.5 559.5,421.5 559.5,422.5 560.5,422.5 560.5,423.5 561.5,423.5 561.5,424.5 562.5,424.5 562.5,425.5 563.5,426.5 564.5,427.5 565.5,428.5 566.5,429.5 567.5,430.5 568.5,430.5 568.5,431.5 569.5,431.5 569.5,432.5 570.5,432.5 570.5,433.5 571.5,433.5 571.5,434.5 572.5,434.5 572.5,435.5 573.5,435.5 573.5,436.5 574.5,436.5 575.5,437.5 576.5,438.5 576.5,439.5 577.5,439.5 578.5,440.5 579.5,441.5 580.5,441.5 580.5,442.5 581.5,442.5 581.5,443.5 582.5,443.5 583.5,444.5 584.5,445.5 585.5,445.5 585.5,446.5 586.5,446.5 587.5,447.5 588.5,447.5 588.5,448.5 589.5,448.5 589.5,449.5 590.5,449.5 591.5,450.5 592.5,450.5 592.5,451.5 593.5,451.5 594.5,452.5 595.5,452.5 595.5,453.5 596.5,453.5 597.5,454.5 598.5,454.5 599.5,455.5 600.5,455.5 600.5,456.5 601.5,456.5 602.5,457.5 603.5,457.5 604.5,458.5 605.5,458.5 605.5,459.5 606.5,459.5 607.5,460.5 608.5,460.5 609.5,461.5 610.5,461.5 611.5,462.5 612.5,462.5 613.5,463.5 614.5,463.5 615.5,464.5 616.5,464.5 617.5,465.5 619.5,465.5 619.5,466.5 621.5,466.5 621.5,467.5 623.5,467.5 624.5,468.5 626.5,468.5 626.5,469.5 628.5,469.5 629.5,470.5 631.5,470.5 631.5,471.5 634.5,471.5 634.5,472.5 637.5,472.5 637.5,473.5 639.5,473.5 640.5,474.5 642.5,474.5 643.5,475.5 646.5,475.5 646.5,476.5 649.5,476.5 650.5,477.5 653.5,477.5 654.5,478.5 657.5,478.5 658.5,479.5 662.5,479.5 662.5,480.5 666.5,480.5 667.5,481.5 671.5,481.5 672.5,482.5 677.5,482.5 677.5,483.5 683.5,483.5 683.5,484.5 690.5,484.5 690.5,485.5 697.5,485.5 697.5,486.5 706.5,486.5 706.5,487.5 716.5,487.5 717.5,488.5 729.5,488.5 729.5,489.5 746.5,489.5 746.5,490.5 769.5,490.5 770.5,491.5 811.5,491.5 811.5,492.5 930.5,492.5"/></g><g font-weight="bold"><text x="53.5" y="160.5" font-size="14" fill="#cacaca" text-anchor="end" textLength="40.85" lengthAdjust="spacingAndGlyphs">800mV</text><text x="53.5" y="194.5" font-size="14" fill="#cacaca" text-anchor="end" textLength="40.85" lengthAdjust="spacingAndGlyphs">720mV</text><text x="53.5" y="227.5" font-size="14" fill="#cacaca" text-anchor="end" textLength="40.85" lengthAdjust="spacingAndGlyphs">640mV</text><text x="53.5" y="261.5" font-size="14" fill="#cacaca" text-anchor="end" textLength="40.85" lengthAdjust="spacingAndGlyphs">560mV</text><text x="53.5" y="295.5" font-size="14" fill="#cacaca" text-anchor="end" textLength="40.85" lengthAdjust="spacingAndGlyphs">480mV</text><text x="53.5" y="328.5" font-size="14" fill="#cacaca" text-anchor="end" textLength="40.85" lengthAdjust="spacingAndGlyphs">400mV</text><text x="53.5" y="362.5" font-size="14" fill="#cacaca" text-anchor="end" textLength="40.85" lengthAdjust="spacingAndGlyphs">320mV</text><text x="53.5" y="395.5" font-size="14" fill="#cacaca" text-anchor="end" textLength="40.85" lengthAdjust="spacingAndGlyphs">240mV</text><text x="53.5" y="429.5" font-size="14" fill="#cacaca" text-anchor="end" textLength="40.85" lengthAdjust="spacingAndGlyphs">160mV</text><text x="53.5" y="463.5" font-size="14" fill="#cacaca" text-anchor="end" textLength="33.81" lengthAdjust="spacingAndGlyphs">80mV</text><text x="53.5" y="496.5" font-size="14" fill="#cacaca" text-anchor="end" textLength="26.76" lengthAdjust="spacingAndGlyphs">0mV</text><text x="53.5" y="530.5" font-size="14" fill="#cacaca" text-anchor="end" textLength="38.03" lengthAdjust="spacingAndGlyphs">-80mV</text><text x="62" y="546.5" font-size="14" fill="#cacaca" text-anchor="middle" textLength="25.36" lengthAdjust="spacingAndGlyphs">0ms</text><text x="149" y="546.5" font-size="14" fill="#cacaca" text-anchor="middle" textLength="32.4" lengthAdjust="spacingAndGlyphs">60ms</text><text x="236" y="546.5" font-size="14" fill="#cacaca" text-anchor="middle" textLength="39.45" lengthAdjust="spacingAndGlyphs">120ms</text><text x="322" y="546.5" font-size="14" fill="#cacaca" text-anchor="middle" textLength="39.45" lengthAdjust="spacingAndGlyphs">180ms</text><text x="409" y="546.5" font-size="14" fill="#cacaca" text-anchor="middle" textLength="39.45" lengthAdjust="spacingAndGlyphs">240ms</text><text x="496" y="546.5" font-size="14" fill="#cacaca" text-anchor="middle" textLength="39.45" lengthAdjust="spacingAndGlyphs">300ms</text><text x="583" y="546.5" font-size="14" fill="#cacaca" text-anchor="middle" textLength="39.45" lengthAdjust="spacingAndGlyphs">360ms</text><text x="670" y="546.5" font-size="14" fill="#cacaca" text-anchor="middle" textLength="39.45" lengthAdjust="spacingAndGlyphs">420ms</text><text x="756" y="546.5" font-size="14" fill="#cacaca" text-anchor="middle" textLength="39.45" lengthAdjust="spacingAndGlyphs">480ms</text><text x="843" y="546.5" font-size="14" fill="#cacaca" text-anchor="middle" textLength="39.45" lengthAdjust="spacingAndGlyphs">540ms</text><text x="930" y="546.5" font-size="14" fill="#cacaca" text-anchor="middle" textLength="39.45" lengthAdjust="spacingAndGlyphs">600ms</text><text x="279" y="150.7" font-size="13.5" fill="#00ff00" text-anchor="middle" textLength="54" lengthAdjust="spacingAndGlyphs">V(target)</text><text x="711.7" y="150.7" font-size="13.5" fill="#0000ff" text-anchor="middle" textLength="24.5" lengthAdjust="spacingAndGlyphs">V(b)</text></g>
<rect x="970" y="595" width="938" height="414" fill="#000"/><g shape-rendering="crispEdges" fill="none" stroke-width="1"><path stroke="#8c8c8c" stroke-dasharray="3 3" d="M1097.5 615V984M1185.5 615V984M1273.5 615V984M1361.5 615V984M1449.5 615V984M1536.5 615V984M1624.5 615V984M1712.5 615V984M1800.5 615V984M1009 647.5H1889M1009 680.5H1889M1009 714.5H1889M1009 748.5H1889M1009 781.5H1889M1009 815.5H1889M1009 848.5H1889M1009 882.5H1889M1009 916.5H1889M1009 949.5H1889"/><path stroke="#c0c0c0" d="M1009.5 613.5H1888.5V983.5H1009.5ZM1009.5 983V991M1097.5 983V991M1185.5 983V991M1273.5 983V991M1361.5 983V991M1449.5 983V991M1536.5 983V991M1624.5 983V991M1712.5 983V991M1800.5 983V991M1888.5 983V991M1002 613.5H1010M1002 647.5H1010M1002 680.5H1010M1002 714.5H1010M1002 748.5H1010M1002 781.5H1010M1002 815.5H1010M1002 848.5H1010M1002 882.5H1010M1002 916.5H1010M1002 949.5H1010M1002 983.5H1010"/><polyline stroke="#00ff00" points="1009.5,949.5 1165.5,949.5 1166.5,948.5 1177.5,948.5 1177.5,947.5 1189.5,947.5 1190.5,946.5 1203.5,946.5 1203.5,945.5 1218.5,945.5 1219.5,944.5 1238.5,944.5 1238.5,943.5 1317.5,943.5 1318.5,944.5 1337.5,944.5 1337.5,945.5 1352.5,945.5 1352.5,946.5 1365.5,946.5 1366.5,947.5 1378.5,947.5 1378.5,948.5 1390.5,948.5 1390.5,949.5 1888.5,949.5"/><polyline stroke="#0000ff" points="1009.5,949.5 1167.5,949.5 1167.5,948.5 1170.5,948.5 1171.5,947.5 1173.5,947.5 1173.5,946.5 1175.5,946.5 1175.5,945.5 1176.5,945.5 1177.5,944.5 1178.5,944.5 1178.5,943.5 1179.5,943.5 1180.5,942.5 1181.5,942.5 1181.5,941.5 1182.5,941.5 1182.5,940.5 1183.5,940.5 1183.5,939.5 1184.5,939.5 1184.5,938.5 1185.5,938.5 1185.5,937.5 1186.5,937.5 1186.5,936.5 1187.5,935.5 1188.5,934.5 1189.5,933.5 1189.5,932.5 1190.5,932.5 1190.5,931.5 1191.5,930.5 1192.5,929.5 1192.5,928.5 1193.5,927.5 1194.5,926.5 1194.5,925.5 1195.5,924.5 1195.5,923.5 1196.5,922.5 1197.5,921.5 1197.5,920.5 1198.5,919.5 1198.5,918.5 1199.5,917.5 1199.5,916.5 1200.5,915.5 1200.5,914.5 1201.5,913.5 1201.5,912.5 1202.5,911.5 1202.5,910.5 1203.5,909.5 1203.5,908.5 1204.5,907.5 1204.5,906.5 1205.5,904.5 1205.5,903.5 1206.5,902.5 1206.5,901.5 1207.5,900.5 1207.5,899.5 1208.5,897.5 1208.5,896.5 1209.5,895.5 1209.5,894.5 1210.5,892.5 1210.5,891.5 1211.5,890.5 1211.5,889.5 1212.5,887.5 1212.5,886.5 1213.5,885.5 1213.5,883.5 1214.5,882.5 1214.5,880.5 1215.5,879.5 1215.5,878.5 1216.5,876.5 1216.5,875.5 1217.5,873.5 1217.5,872.5 1218.5,870.5 1218.5,869.5 1219.5,867.5 1219.5,866.5 1220.5,864.5 1220.5,863.5 1221.5,861.5 1221.5,860.5 1222.5,858.5 1222.5,856.5 1223.5,855.5 1223.5,853.5 1224.5,852.5 1224.5,850.5 1225.5,848.5 1225.5,847.5 1226.5,845.5 1226.5,843.5 1227.5,842.5 1227.5,840.5 1228.5,838.5 1228.5,836.5 1229.5,835.5 1229.5,833.5 1230.5,831.5 1230.5,829.5 1231.5,828.5 1231.5,826.5 1232.5,824.5 1232.5,822.5 1233.5,820.5 1233.5,819.5 1234.5,817.5 1234.5,815.5 1235.5,813.5 1235.5,811.5 1236.5,809.5 1236.5,807.5 1237.5,806.5 1237.5,804.5 1238.5,802.5 1238.5,800.5 1239.5,798.5 1239.5,796.5 1240.5,794.5 1240.5,792.5 1241.5,790.5 1241.5,788.5 1242.5,786.5 1242.5,784.5 1243.5,782.5 1243.5,780.5 1244.5,778.5 1244.5,776.5 1245.5,774.5 1245.5,772.5 1246.5,770.5 1246.5,768.5 1247.5,766.5 1247.5,764.5 1248.5,762.5 1248.5,760.5 1249.5,758.5 1249.5,756.5 1250.5,754.5 1250.5,752.5 1251.5,750.5 1251.5,748.5 1252.5,746.5 1252.5,744.5 1253.5,742.5 1253.5,740.5 1254.5,738.5 1254.5,736.5 1255.5,733.5 1255.5,731.5 1256.5,729.5 1256.5,727.5 1257.5,725.5 1257.5,723.5 1258.5,721.5 1258.5,719.5 1259.5,717.5 1259.5,715.5 1260.5,712.5 1260.5,710.5 1261.5,708.5 1261.5,706.5 1262.5,704.5 1262.5,702.5 1263.5,700.5 1263.5,698.5 1264.5,695.5 1264.5,693.5 1265.5,691.5 1265.5,689.5 1266.5,687.5 1266.5,685.5 1267.5,683.5 1267.5,681.5 1268.5,679.5 1268.5,676.5 1269.5,674.5 1269.5,672.5 1270.5,670.5 1270.5,668.5 1271.5,666.5 1271.5,664.5 1271.5,662.5 1272.5,660.5 1272.5,657.5 1273.5,655.5 1273.5,653.5 1274.5,651.5 1274.5,649.5 1275.5,647.5 1275.5,645.5 1276.5,643.5 1276.5,641.5 1277.5,639.5 1277.5,637.5 1278.5,635.5 1278.5,632.5 1279.5,630.5 1279.5,628.5 1280.5,626.5 1280.5,624.5 1281.5,622.5 1281.5,620.5 1282.5,618.5 1282.5,616.5 1283.5,614.5 1283.5,613.5 1399.5,613.5 1400.5,614.5 1401.5,614.5 1402.5,615.5 1403.5,615.5 1403.5,616.5 1404.5,616.5 1404.5,617.5 1405.5,617.5 1405.5,618.5 1406.5,618.5 1406.5,619.5 1407.5,619.5 1407.5,620.5 1408.5,620.5 1408.5,621.5 1409.5,622.5 1410.5,623.5 1410.5,624.5 1411.5,624.5 1411.5,625.5 1412.5,626.5 1412.5,627.5 1412.5,628.5 1413.5,628.5 1413.5,629.5 1414.5,630.5 1414.5,631.5 1415.5,632.5 1415.5,633.5 1416.5,634.5 1416.5,635.5 1417.5,636.5 1417.5,637.5 1418.5,638.5 1418.5,639.5 1419.5,640.5 1419.5,641.5 1420.5,642.5 1420.5,643.5 1421.5,644.5 1421.5,645.5 1422.5,646.5 1422.5,647.5 1423.5,648.5 1423.5,649.5 1424.5,650.5 1424.5,651.5 1425.5,652.5 1425.5,654.5 1426.5,655.5 1426.5,656.5 1427.5,657.5 1427.5,658.5 1427.5,659.5 1428.5,661.5 1428.5,662.5 1429.5,663.5 1429.5,664.5 1430.5,665.5 1430.5,667.5 1431.5,668.5 1431.5,669.5 1432.5,670.5 1432.5,671.5 1433.5,673.5 1433.5,674.5 1434.5,675.5 1434.5,676.5 1435.5,678.5 1435.5,679.5 1436.5,680.5 1436.5,681.5 1437.5,683.5 1437.5,684.5 1438.5,685.5 1438.5,686.5 1439.5,688.5 1439.5,689.5 1440.5,690.5 1440.5,691.5 1441.5,693.5 1441.5,694.5 1442.5,695.5 1442.5,697.5 1442.5,698.5 1443.5,699.5 1443.5,700.5 1444.5,702.5 1444.5,703.5 1445.5,704.5 1445.5,705.5 1446.5,707.5 1446.5,708.5 1447.5,709.5 1447.5,711.5 1448.5,712.5 1448.5,713.5 1449.5,714.5 1449.5,716.5 1450.5,717.5 1450.5,718.5 1451.5,719.5 1451.5,721.5 1452.5,722.5 1452.5,723.5 1453.5,724.5 1453.5,726.5 1454.5,727.5 1454.5,728.5 1455.5,729.5 1455.5,731.5 1456.5,732.5 1456.5,733.5 1456.5,734.5 1457.5,736.5 1457.5,737.5 1458.5,738.5 1458.5,739.5 1459.5,741.5 1459.5,742.5 1460.5,743.5 1460.5,744.5 1461.5,745.5 1461.5,747.5 1462.5,748.5 1462.5,749.5 1463.5,750.5 1463.5,751.5 1464.5,753.5 1464.5,754.5 1465.5,755.5 1465.5,756.5 1466.5,757.5 1466.5,759.5 1467.5,760.5 1467.5,761.5 1468.5,762.5 1468.5,763.5 1469.5,764.5 1469.5,766.5 1470.5,767.5 1470.5,768.5 1471.5,769.5 1471.5,770.5 1472.5,771.5 1472.5,772.5 1473.5,773.5 1473.5,775.5 1474.5,776.5 1474.5,777.5 1475.5,778.5 1475.5,779.5 1476.5,780.5 1476.5,781.5 1477.5,782.5 1477.5,783.5 1478.5,784.5 1478.5,785.5 1479.5,787.5 1479.5,788.5 1480.5,789.5 1480.5,790.5 1481.5,791.5 1481.5,792.5 1482.5,793.5 1482.5,794.5 1483.5,795.5 1483.5,796.5 1484.5,797.5 1484.5,798.5 1485.5,799.5 1485.5,800.5 1486.5,801.5 1486.5,802.5 1487.5,803.5 1487.5,804.5 1488.5,805.5 1488.5,806.5 1489.5,807.5 1489.5,808.5 1490.5,809.5 1490.5,810.5 1491.5,811.5 1491.5,812.5 1492.5,813.5 1492.5,814.5 1493.5,814.5 1493.5,815.5 1494.5,816.5 1494.5,817.5 1495.5,818.5 1495.5,819.5 1496.5,820.5 1496.5,821.5 1497.5,822.5 1497.5,823.5 1498.5,824.5 1499.5,825.5 1499.5,826.5 1500.5,827.5 1500.5,828.5 1501.5,829.5 1501.5,830.5 1502.5,830.5 1502.5,831.5 1503.5,832.5 1503.5,833.5 1504.5,834.5 1504.5,835.5 1505.5,835.5 1505.5,836.5 1506.5,837.5 1506.5,838.5 1507.5,839.5 1508.5,840.5 1508.5,841.5 1509.5,842.5 1509.5,843.5 1510.5,843.5 1510.5,844.5 1511.5,845.5 1511.5,846.5 1512.5,846.5 1512.5,847.5 1513.5,848.5 1513.5,849.5 1514.5,849.5 1514.5,850.5 1515.5,851.5 1516.5,852.5 1516.5,853.5 1517.5,854.5 1518.5,855.5 1518.5,856.5 1519.5,856.5 1519.5,857.5 1520.5,858.5 1521.5,859.5 1521.5,860.5 1522.5,860.5 1522.5,861.5 1523.5,862.5 1524.5,863.5 1524.5,864.5 1525.5,864.5 1525.5,865.5 1526.5,866.5 1527.5,867.5 1528.5,868.5 1528.5,869.5 1529.5,869.5 1529.5,870.5 1530.5,871.5 1531.5,872.5 1532.5,873.5 1533.5,874.5 1533.5,875.5 1534.5,876.5 1535.5,877.5 1536.5,878.5 1536.5,879.5 1537.5,879.5 1537.5,880.5 1538.5,880.5 1538.5,881.5 1539.5,881.5 1539.5,882.5 1540.5,882.5 1540.5,883.5 1541.5,883.5 1541.5,884.5 1542.5,884.5 1542.5,885.5 1543.5,885.5 1543.5,886.5 1544.5,886.5 1544.5,887.5 1545.5,887.5 1545.5,888.5 1546.5,888.5 1546.5,889.5 1547.5,889.5 1547.5,890.5 1548.5,890.5 1548.5,891.5 1549.5,891.5 1550.5,892.5 1551.5,893.5 1552.5,894.5 1553.5,895.5 1554.5,895.5 1554.5,896.5 1555.5,896.5 1555.5,897.5 1556.5,897.5 1556.5,898.5 1557.5,898.5 1558.5,899.5 1559.5,900.5 1560.5,900.5 1560.5,901.5 1561.5,901.5 1562.5,902.5 1563.5,903.5 1564.5,903.5 1564.5,904.5 1565.5,904.5 1566.5,905.5 1567.5,906.5 1568.5,906.5 1568.5,907.5 1569.5,907.5 1570.5,908.5 1571.5,908.5 1571.5,909.5 1572.5,909.5 1573.5,910.5 1574.5,910.5 1574.5,911.5 1576.5,911.5 1576.5,912.5 1577.5,912.5 1578.5,913.5 1579.5,913.5 1579.5,914.5 1581.5,914.5 1581.5,915.5 1582.5,915.5 1583.5,916.5 1584.5,916.5 1585.5,917.5 1586.5,917.5 1587.5,918.5 1588.5,918.5 1589.5,919.5 1590.5,919.5 1591.5,920.5 1592.5,920.5 1593.5,921.5 1594.5,921.5 1595.5,922.5 1596.5,922.5 1597.5,923.5 1599.5,923.5 1599.5,924.5 1601.5,924.5 1602.5,925.5 1604.5,925.5 1604.5,926.5 1606.5,926.5 1607.5,927.5 1609.5,927.5 1609.5,928.5 1612.5,928.5 1612.5,929.5 1614.5,929.5 1615.5,930.5 1617.5,930.5 1618.5,931.5 1621.5,931.5 1621.5,932.5 1624.5,932.5 1625.5,933.5 1628.5,933.5 1628.5,934.5 1631.5,934.5 1632.5,935.5 1636.5,935.5 1636.5,936.5 1640.5,936.5 1640.5,937.5 1645.5,937.5 1645.5,938.5 1650.5,938.5 1650.5,939.5 1655.5,939.5 1656.5,940.5 1661.5,940.5 1662.5,941.5 1668.5,941.5 1668.5,942.5 1675.5,942.5 1676.5,943.5 1684.5,943.5 1685.5,944.5 1695.5,944.5 1695.5,945.5 1708.5,945.5 1708.5,946.5 1725.5,946.5 1725.5,947.5 1748.5,947.5 1749.5,948.5 1791.5,948.5 1791.5,949.5 1888.5,949.5"/></g><g font-weight="bold"><text x="1000.5" y="617.5" font-size="14" fill="#cacaca" text-anchor="end" textLength="26.06" lengthAdjust="spacingAndGlyphs">5.0V</text><text x="1000.5" y="651.5" font-size="14" fill="#cacaca" text-anchor="end" textLength="26.06" lengthAdjust="spacingAndGlyphs">4.5V</text><text x="1000.5" y="684.5" font-size="14" fill="#cacaca" text-anchor="end" textLength="26.06" lengthAdjust="spacingAndGlyphs">4.0V</text><text x="1000.5" y="718.5" font-size="14" fill="#cacaca" text-anchor="end" textLength="26.06" lengthAdjust="spacingAndGlyphs">3.5V</text><text x="1000.5" y="752.5" font-size="14" fill="#cacaca" text-anchor="end" textLength="26.06" lengthAdjust="spacingAndGlyphs">3.0V</text><text x="1000.5" y="785.5" font-size="14" fill="#cacaca" text-anchor="end" textLength="26.06" lengthAdjust="spacingAndGlyphs">2.5V</text><text x="1000.5" y="819.5" font-size="14" fill="#cacaca" text-anchor="end" textLength="26.06" lengthAdjust="spacingAndGlyphs">2.0V</text><text x="1000.5" y="852.5" font-size="14" fill="#cacaca" text-anchor="end" textLength="26.06" lengthAdjust="spacingAndGlyphs">1.5V</text><text x="1000.5" y="886.5" font-size="14" fill="#cacaca" text-anchor="end" textLength="26.06" lengthAdjust="spacingAndGlyphs">1.0V</text><text x="1000.5" y="920.5" font-size="14" fill="#cacaca" text-anchor="end" textLength="26.06" lengthAdjust="spacingAndGlyphs">0.5V</text><text x="1000.5" y="953.5" font-size="14" fill="#cacaca" text-anchor="end" textLength="26.06" lengthAdjust="spacingAndGlyphs">0.0V</text><text x="1000.5" y="987.5" font-size="14" fill="#cacaca" text-anchor="end" textLength="30.28" lengthAdjust="spacingAndGlyphs">-0.5V</text><text x="1009" y="1003.5" font-size="14" fill="#cacaca" text-anchor="middle" textLength="25.36" lengthAdjust="spacingAndGlyphs">0ms</text><text x="1097" y="1003.5" font-size="14" fill="#cacaca" text-anchor="middle" textLength="32.4" lengthAdjust="spacingAndGlyphs">60ms</text><text x="1185" y="1003.5" font-size="14" fill="#cacaca" text-anchor="middle" textLength="39.45" lengthAdjust="spacingAndGlyphs">120ms</text><text x="1273" y="1003.5" font-size="14" fill="#cacaca" text-anchor="middle" textLength="39.45" lengthAdjust="spacingAndGlyphs">180ms</text><text x="1361" y="1003.5" font-size="14" fill="#cacaca" text-anchor="middle" textLength="39.45" lengthAdjust="spacingAndGlyphs">240ms</text><text x="1449" y="1003.5" font-size="14" fill="#cacaca" text-anchor="middle" textLength="39.45" lengthAdjust="spacingAndGlyphs">300ms</text><text x="1536" y="1003.5" font-size="14" fill="#cacaca" text-anchor="middle" textLength="39.45" lengthAdjust="spacingAndGlyphs">360ms</text><text x="1624" y="1003.5" font-size="14" fill="#cacaca" text-anchor="middle" textLength="39.45" lengthAdjust="spacingAndGlyphs">420ms</text><text x="1712" y="1003.5" font-size="14" fill="#cacaca" text-anchor="middle" textLength="39.45" lengthAdjust="spacingAndGlyphs">480ms</text><text x="1800" y="1003.5" font-size="14" fill="#cacaca" text-anchor="middle" textLength="39.45" lengthAdjust="spacingAndGlyphs">540ms</text><text x="1888" y="1003.5" font-size="14" fill="#cacaca" text-anchor="middle" textLength="39.45" lengthAdjust="spacingAndGlyphs">600ms</text><text x="1228.75" y="607.7" font-size="13.5" fill="#00ff00" text-anchor="middle" textLength="54" lengthAdjust="spacingAndGlyphs">V(target)</text><text x="1666.93" y="607.7" font-size="13.5" fill="#0000ff" text-anchor="middle" textLength="24.5" lengthAdjust="spacingAndGlyphs">V(b)</text></g>
<svg x="970" y="138" width="938" height="414" viewBox="970 138 938 414">
<g shape-rendering="crispEdges" fill="none" stroke-width="1"><path stroke="#000080" stroke-linejoin="bevel" d="M1156.5 315.5L1161.5 315.5L1165.5 306.5L1175.5 325.5L1185.5 306.5L1194.5 325.5L1199.5 315.5L1204.5 315.5M1270.5 353.5L1275.5 353.5L1280.5 344.5L1289.5 363.5L1299.5 344.5L1308.5 363.5L1313.5 353.5L1318.5 353.5M1327.5 353.5L1332.5 353.5L1337.5 344.5L1346.5 363.5L1356.5 344.5L1365.5 363.5L1370.5 353.5L1375.5 353.5M1422.5 306.5L1427.5 306.5L1432.5 296.5L1441.5 315.5L1451.5 296.5L1461.5 315.5L1465.5 306.5L1470.5 306.5M1422.5 391.5L1427.5 391.5L1432.5 382.5L1441.5 401.5L1451.5 382.5L1461.5 401.5L1465.5 391.5L1470.5 391.5M1546.5 229.5L1551.5 229.5L1556.5 220.5L1565.5 239.5L1575.5 220.5L1584.5 239.5L1589.5 229.5L1594.5 229.5M1641.5 267.5L1646.5 267.5L1651.5 258.5L1660.5 277.5L1670.5 258.5L1679.5 277.5L1684.5 267.5L1689.5 267.5M1717.5 267.5L1722.5 267.5L1727.5 258.5L1736.5 277.5L1746.5 258.5L1756.5 277.5L1760.5 267.5L1765.5 267.5M1556.5 267.5L1572.5 267.5M1577.5 267.5L1594.5 267.5M1572.5 258.5L1572.5 277.5M1577.5 258.5L1577.5 277.5M1717.5 229.5L1734.5 229.5M1739.5 229.5L1756.5 229.5M1734.5 220.5L1734.5 239.5M1739.5 220.5L1739.5 239.5M1242.5 287.5L1280.5 306.5L1242.5 325.5ZM1244.5 296.5L1249.5 296.5M1244.5 315.5L1249.5 315.5M1246.5 312.5L1246.5 318.5M1261.5 287.5L1261.5 296.5M1261.5 325.5L1261.5 315.5M1263.5 294.5L1268.5 294.5M1265.5 291.5L1265.5 297.5M1263.5 317.5L1268.5 317.5M1327.5 372.5L1365.5 391.5L1327.5 410.5ZM1330.5 382.5L1335.5 382.5M1330.5 401.5L1335.5 401.5M1332.5 398.5L1332.5 404.5M1346.5 372.5L1346.5 382.5M1346.5 410.5L1346.5 401.5M1349.5 379.5L1354.5 379.5M1351.5 376.5L1351.5 382.5M1349.5 403.5L1354.5 403.5M1556.5 296.5L1594.5 315.5L1556.5 334.5ZM1558.5 306.5L1563.5 306.5M1558.5 325.5L1563.5 325.5M1560.5 322.5L1560.5 328.5M1575.5 296.5L1575.5 306.5M1575.5 334.5L1575.5 325.5M1577.5 303.5L1582.5 303.5M1579.5 300.5L1579.5 306.5M1577.5 327.5L1582.5 327.5M1708.5 296.5L1746.5 315.5L1708.5 334.5ZM1710.5 306.5L1716.5 306.5M1710.5 325.5L1716.5 325.5M1713.5 322.5L1713.5 328.5M1727.5 296.5L1727.5 306.5M1727.5 334.5L1727.5 325.5M1729.5 303.5L1735.5 303.5M1732.5 300.5L1732.5 306.5M1729.5 327.5L1735.5 327.5M994.5 372.5L994.5 377.5M994.5 415.5L994.5 420.5M992.5 382.5L997.5 382.5M994.5 380.5L994.5 385.5M992.5 410.5L997.5 410.5M1413.5 210.5L1413.5 215.5M1413.5 253.5L1413.5 258.5M1411.5 220.5L1416.5 220.5M1413.5 218.5L1413.5 223.5M1411.5 248.5L1416.5 248.5M1394.5 429.5L1394.5 434.5M1394.5 472.5L1394.5 477.5M1392.5 439.5L1397.5 439.5M1394.5 437.5L1394.5 442.5M1392.5 467.5L1397.5 467.5M1870.5 296.5L1870.5 308.5M1850.5 308.5L1889.5 308.5M1850.5 322.5L1889.5 322.5M1860.5 313.5L1879.5 313.5L1879.5 317.5L1860.5 317.5ZM1860.5 327.5L1879.5 327.5L1879.5 332.5L1860.5 332.5ZM1870.5 332.5L1870.5 344.5M1858.5 301.5L1863.5 301.5M1860.5 298.5L1860.5 304.5M1870.5 363.5L1870.5 375.5M1850.5 375.5L1889.5 375.5M1850.5 389.5L1889.5 389.5M1860.5 379.5L1879.5 379.5L1879.5 384.5L1860.5 384.5ZM1860.5 394.5L1879.5 394.5L1879.5 398.5L1860.5 398.5ZM1870.5 398.5L1870.5 410.5M1858.5 367.5L1863.5 367.5M1860.5 365.5L1860.5 370.5M1480.5 306.5L1490.5 306.5M1503.5 316.5L1515.5 306.5L1527.5 306.5M1489.5 287.5L1491.5 291.5M1518.5 287.5L1516.5 291.5M1491.5 279.5L1497.5 279.5M1494.5 277.5L1494.5 282.5M1513.5 277.5L1513.5 282.5M1480.5 391.5L1490.5 391.5M1503.5 401.5L1515.5 391.5L1527.5 391.5M1489.5 372.5L1491.5 376.5M1518.5 372.5L1516.5 376.5M1491.5 365.5L1497.5 365.5M1494.5 363.5L1494.5 368.5M1513.5 363.5L1513.5 368.5"/><g stroke="#000080" shape-rendering="auto" stroke-width="1.1"><circle cx="994.5" cy="396.1" r="18.2"/><path d="M980.5 396.1a7 7 0 0 1 14 0a7 7 0 0 0 14 0"/><circle cx="1413.5" cy="234.1" r="18.2"/><path d="M1399.5 234.1a7 7 0 0 1 14 0a7 7 0 0 0 14 0"/><circle cx="1394.5" cy="453.1" r="18.2"/><path d="M1380.5 453.1a7 7 0 0 1 14 0a7 7 0 0 0 14 0"/><circle cx="1503.2" cy="306.5" r="18.1"/><circle cx="1493.5" cy="306.5" r="1.9"/><circle cx="1501.5" cy="317.5" r="1.9"/><circle cx="1503.2" cy="391.5" r="18.1"/><circle cx="1493.5" cy="391.5" r="1.9"/><circle cx="1501.5" cy="403.5" r="1.9"/></g><path stroke="#0000ff" stroke-linejoin="bevel" d="M994.5 372.5L994.5 315.5M994.5 315.5L1156.5 315.5M1051.5 315.5L1051.5 306.5M1204.5 315.5L1242.5 315.5M994.5 420.5L994.5 477.5M994.5 477.5L1394.5 477.5M1394.5 477.5L1394.5 486.5M1242.5 296.5L1232.5 296.5M1232.5 296.5L1232.5 277.5M1232.5 277.5L1375.5 277.5M1375.5 277.5L1375.5 306.5M1375.5 306.5L1422.5 306.5M1280.5 306.5L1299.5 306.5M1299.5 306.5L1299.5 277.5M1232.5 353.5L1270.5 353.5M1318.5 353.5L1327.5 353.5M1318.5 353.5L1318.5 382.5M1318.5 382.5L1327.5 382.5M1375.5 353.5L1384.5 353.5M1384.5 353.5L1384.5 391.5M1365.5 391.5L1422.5 391.5M1327.5 401.5L1318.5 401.5M1318.5 401.5L1318.5 477.5M1394.5 429.5L1394.5 353.5M1394.5 353.5L1489.5 353.5M1489.5 353.5L1489.5 372.5M1413.5 210.5L1489.5 210.5M1489.5 210.5L1489.5 287.5M1413.5 258.5L1413.5 267.5M1518.5 287.5L1518.5 248.5M1518.5 248.5L1527.5 248.5M1527.5 248.5L1527.5 258.5M1518.5 372.5L1518.5 344.5M1518.5 344.5L1527.5 344.5M1527.5 344.5L1527.5 353.5M1470.5 306.5L1480.5 306.5M1470.5 391.5L1480.5 391.5M1527.5 306.5L1556.5 306.5M1527.5 391.5L1537.5 391.5M1537.5 391.5L1537.5 306.5M1546.5 306.5L1546.5 229.5M1546.5 267.5L1556.5 267.5M1594.5 267.5L1641.5 267.5M1594.5 229.5L1603.5 229.5M1603.5 229.5L1603.5 315.5M1603.5 315.5L1594.5 315.5M1556.5 325.5L1546.5 325.5M1546.5 325.5L1546.5 429.5M1546.5 429.5L1537.5 429.5M1537.5 429.5L1537.5 439.5M1689.5 267.5L1717.5 267.5M1698.5 229.5L1698.5 306.5M1698.5 306.5L1708.5 306.5M1698.5 229.5L1717.5 229.5M1756.5 229.5L1803.5 229.5M1765.5 267.5L1775.5 267.5M1775.5 229.5L1775.5 315.5M1775.5 315.5L1746.5 315.5M1708.5 325.5L1698.5 325.5M1698.5 325.5L1698.5 344.5M1575.5 296.5L1870.5 296.5M1851.5 296.5L1851.5 287.5M1575.5 334.5L1575.5 410.5M1575.5 410.5L1870.5 410.5M1727.5 334.5L1727.5 410.5M1860.5 410.5L1860.5 439.5M1860.5 439.5L1841.5 439.5M1870.5 344.5L1870.5 363.5M1870.5 353.5L1832.5 353.5M1832.5 353.5L1832.5 382.5M1383.5 486.5h22l-11 11zM1402.5 267.5h22l-11 11zM1516.5 258.5h22l-11 11zM1516.5 353.5h22l-11 11zM1526.5 439.5h22l-11 11zM1687.5 344.5h22l-11 11zM1821.5 382.5h22l-11 11zM1232.5 342.5v22l-11 -11z"/><g fill="#0000ff"><rect x="1049" y="313" width="5" height="5"/><rect x="1297" y="275" width="5" height="5"/><rect x="1316" y="351" width="5" height="5"/><rect x="1316" y="475" width="5" height="5"/><rect x="1392" y="475" width="5" height="5"/><rect x="1382" y="389" width="5" height="5"/><rect x="1535" y="304" width="5" height="5"/><rect x="1544" y="304" width="5" height="5"/><rect x="1544" y="265" width="5" height="5"/><rect x="1601" y="265" width="5" height="5"/><rect x="1696" y="265" width="5" height="5"/><rect x="1773" y="265" width="5" height="5"/><rect x="1773" y="227" width="5" height="5"/><rect x="1725" y="294" width="5" height="5"/><rect x="1849" y="294" width="5" height="5"/><rect x="1725" y="408" width="5" height="5"/><rect x="1858" y="408" width="5" height="5"/><rect x="1868" y="351" width="5" height="5"/></g></g><g font-weight="bold" font-size="13.5"><text x="1013.75" y="206.25" font-size="13.5" fill="#0000c0" textLength="117.5" lengthAdjust="spacingAndGlyphs">1000 samples/sec</text><text x="1042" y="233.75" font-size="13.5" fill="#0000c0" textLength="69.75" lengthAdjust="spacingAndGlyphs">GAIN= 100</text><text x="1170.75" y="230" font-size="13.5" fill="#000" textLength="46.75" lengthAdjust="spacingAndGlyphs">.tran .6</text><text x="1211.25" y="200" font-size="13.5" fill="#000" textLength="223" lengthAdjust="spacingAndGlyphs">PULSE(0 1 10u 1n 1n 100u 1m 10k)</text><text x="1215" y="515" font-size="13.5" fill="#000" textLength="231.25" lengthAdjust="spacingAndGlyphs">PULSE(0 1 800u 1n 1n 100u 1m 10k)</text><text x="1451.25" y="182" font-size="13.5" fill="#000" textLength="360.75" lengthAdjust="spacingAndGlyphs">.model MYSW1 SW(Ron=1 Roff=100Meg Vt=.5 Vh=-.1)</text><text x="1475.75" y="505.9" font-size="13.5" fill="#000" textLength="360" lengthAdjust="spacingAndGlyphs">.model MYSW2 SW(Ron=1 Roff=100Meg Vt=.5 Vh=-.1)</text><text x="1008" y="428.7" font-size="13.5" fill="#000" textLength="131.5" lengthAdjust="spacingAndGlyphs">SINE(0 .1 3 .1 0 0 .5)</text><text x="1056.25" y="305.8" font-size="13.5" fill="#000" textLength="40" lengthAdjust="spacingAndGlyphs" transform="rotate(-90 1056.25 305.8)">target</text><text x="1171.25" y="303" font-size="13.5" fill="#000" textLength="16.3" lengthAdjust="spacingAndGlyphs">R6</text><text x="1172.5" y="337.5" font-size="13.5" fill="#000" textLength="14.3" lengthAdjust="spacingAndGlyphs">2k</text><text x="1270" y="291.8" font-size="13.5" fill="#000" textLength="15.4" lengthAdjust="spacingAndGlyphs">U1</text><text x="1286" y="340.5" font-size="13.5" fill="#000" textLength="15.8" lengthAdjust="spacingAndGlyphs">R8</text><text x="1287" y="375.8" font-size="13.5" fill="#000" textLength="14" lengthAdjust="spacingAndGlyphs">2k</text><text x="1360.9" y="349.7" font-size="13.5" fill="#000" textLength="15.6" lengthAdjust="spacingAndGlyphs">R7</text><text x="1362" y="370.7" font-size="13.5" fill="#000" textLength="14" lengthAdjust="spacingAndGlyphs">2k</text><text x="1354.2" y="408.8" font-size="13.5" fill="#000" textLength="15.6" lengthAdjust="spacingAndGlyphs">U2</text><text x="1008" y="377" font-size="13.5" fill="#000" textLength="17" lengthAdjust="spacingAndGlyphs">V3</text><text x="1428" y="214.6" font-size="13.5" fill="#000" textLength="15.75" lengthAdjust="spacingAndGlyphs">V4</text><text x="1408.75" y="433.75" font-size="13.5" fill="#000" textLength="16.25" lengthAdjust="spacingAndGlyphs">V5</text><text x="1436" y="293" font-size="13.5" fill="#000" textLength="16.5" lengthAdjust="spacingAndGlyphs">R1</text><text x="1435" y="327.5" font-size="13.5" fill="#000" textLength="22" lengthAdjust="spacingAndGlyphs">10k</text><text x="1436.5" y="378.75" font-size="13.5" fill="#000" textLength="16.5" lengthAdjust="spacingAndGlyphs">R2</text><text x="1435" y="413.75" font-size="13.5" fill="#000" textLength="22" lengthAdjust="spacingAndGlyphs">10k</text><text x="1517.5" y="222" font-size="13.5" fill="#000" textLength="33.75" lengthAdjust="spacingAndGlyphs">1Meg</text><text x="1561.25" y="217" font-size="13.5" fill="#000" textLength="16.25" lengthAdjust="spacingAndGlyphs">R3</text><text x="1567" y="255" font-size="13.5" fill="#000" textLength="15.5" lengthAdjust="spacingAndGlyphs">C2</text><text x="1563.25" y="290" font-size="13.5" fill="#000" textLength="23.5" lengthAdjust="spacingAndGlyphs">33n</text><text x="1656.25" y="255" font-size="13.5" fill="#000" textLength="16.25" lengthAdjust="spacingAndGlyphs">R4</text><text x="1649.5" y="290" font-size="13.5" fill="#000" textLength="30.5" lengthAdjust="spacingAndGlyphs">100k</text><text x="1728" y="217" font-size="13.5" fill="#000" textLength="15.25" lengthAdjust="spacingAndGlyphs">C1</text><text x="1724.25" y="252" font-size="13.5" fill="#000" textLength="23.25" lengthAdjust="spacingAndGlyphs">33n</text><text x="1751.25" y="262" font-size="13.5" fill="#000" textLength="16.25" lengthAdjust="spacingAndGlyphs">R5</text><text x="1723.75" y="290" font-size="13.5" fill="#000" textLength="33.75" lengthAdjust="spacingAndGlyphs">1Meg</text><text x="1803.25" y="234.25" font-size="13.5" fill="#000" textLength="7.5" lengthAdjust="spacingAndGlyphs">b</text><text x="1585" y="332" font-size="13.5" fill="#000" textLength="15.75" lengthAdjust="spacingAndGlyphs">U3</text><text x="1739.25" y="336.25" font-size="13.5" fill="#000" textLength="15.25" lengthAdjust="spacingAndGlyphs">U4</text><text x="1884.4" y="300.8" font-size="13.5" fill="#000" textLength="16" lengthAdjust="spacingAndGlyphs">V1</text><text x="1884.6" y="352.6" font-size="13.5" fill="#000" textLength="7" lengthAdjust="spacingAndGlyphs">5</text><text x="1884.4" y="367.8" font-size="13.5" fill="#000" textLength="16.5" lengthAdjust="spacingAndGlyphs">V2</text><text x="1884.6" y="419.7" font-size="13.5" fill="#000" textLength="7" lengthAdjust="spacingAndGlyphs">5</text><text x="1840.2" y="443.5" font-size="13.5" fill="#000" text-anchor="end" textLength="12.3" lengthAdjust="spacingAndGlyphs">-v</text><text x="1856" y="285.2" font-size="13.5" fill="#000" textLength="15.8" lengthAdjust="spacingAndGlyphs" transform="rotate(-90 1856 285.2)">+v</text><text x="1266" y="285" font-size="13.5" fill="#000" textLength="16" lengthAdjust="spacingAndGlyphs" transform="rotate(-90 1266 285)">+v</text><text x="1266" y="338.5" font-size="13.5" fill="#000" textLength="13.5" lengthAdjust="spacingAndGlyphs" transform="rotate(-90 1266 338.5)">-v</text><text x="1351" y="369.5" font-size="13.5" fill="#000" textLength="16" lengthAdjust="spacingAndGlyphs" transform="rotate(-90 1351 369.5)">+v</text><text x="1351" y="423" font-size="13.5" fill="#000" textLength="13.5" lengthAdjust="spacingAndGlyphs" transform="rotate(-90 1351 423)">-v</text><text x="1486" y="370.5" font-size="13.5" fill="#000" textLength="50" lengthAdjust="spacingAndGlyphs" transform="rotate(-90 1486 370.5)">MYSW1</text><text x="1533" y="336" font-size="13.5" fill="#000" textLength="15" lengthAdjust="spacingAndGlyphs" transform="rotate(-90 1533 336)">S1</text><text x="1486" y="456.25" font-size="13.5" fill="#000" textLength="50" lengthAdjust="spacingAndGlyphs" transform="rotate(-90 1486 456.25)">MYSW2</text><text x="1533" y="421.25" font-size="13.5" fill="#000" textLength="15" lengthAdjust="spacingAndGlyphs" transform="rotate(-90 1533 421.25)">S2</text></g>
</svg>
<svg x="12" y="595" width="938" height="414" viewBox="12 595 938 414">
<g shape-rendering="crispEdges" fill="none" stroke-width="1"><path stroke="#000080" stroke-linejoin="bevel" d="M198.5 773.5L203.5 773.5L207.5 763.5L217.5 783.5L227.5 763.5L236.5 783.5L241.5 773.5L246.5 773.5M312.5 811.5L317.5 811.5L322.5 802.5L331.5 821.5L341.5 802.5L350.5 821.5L355.5 811.5L360.5 811.5M369.5 811.5L374.5 811.5L379.5 802.5L388.5 821.5L398.5 802.5L407.5 821.5L412.5 811.5L417.5 811.5M464.5 763.5L469.5 763.5L474.5 754.5L483.5 773.5L493.5 754.5L503.5 773.5L507.5 763.5L512.5 763.5M464.5 849.5L469.5 849.5L474.5 840.5L483.5 859.5L493.5 840.5L503.5 859.5L507.5 849.5L512.5 849.5M588.5 687.5L593.5 687.5L598.5 678.5L607.5 697.5L617.5 678.5L626.5 697.5L631.5 687.5L636.5 687.5M683.5 725.5L688.5 725.5L693.5 716.5L702.5 735.5L712.5 716.5L721.5 735.5L726.5 725.5L731.5 725.5M759.5 725.5L764.5 725.5L769.5 716.5L778.5 735.5L788.5 716.5L798.5 735.5L802.5 725.5L807.5 725.5M598.5 725.5L614.5 725.5M619.5 725.5L636.5 725.5M614.5 716.5L614.5 735.5M619.5 716.5L619.5 735.5M759.5 687.5L776.5 687.5M781.5 687.5L798.5 687.5M776.5 678.5L776.5 697.5M781.5 678.5L781.5 697.5M284.5 744.5L322.5 763.5L284.5 783.5ZM286.5 754.5L291.5 754.5M286.5 773.5L291.5 773.5M288.5 770.5L288.5 776.5M303.5 744.5L303.5 754.5M303.5 783.5L303.5 773.5M305.5 752.5L310.5 752.5M307.5 749.5L307.5 755.5M305.5 775.5L310.5 775.5M369.5 830.5L407.5 849.5L369.5 868.5ZM372.5 840.5L377.5 840.5M372.5 859.5L377.5 859.5M374.5 856.5L374.5 862.5M388.5 830.5L388.5 840.5M388.5 868.5L388.5 859.5M391.5 837.5L396.5 837.5M393.5 834.5L393.5 840.5M391.5 861.5L396.5 861.5M598.5 754.5L636.5 773.5L598.5 792.5ZM600.5 763.5L605.5 763.5M600.5 783.5L605.5 783.5M602.5 780.5L602.5 785.5M617.5 754.5L617.5 763.5M617.5 792.5L617.5 783.5M619.5 761.5L624.5 761.5M621.5 758.5L621.5 764.5M619.5 785.5L624.5 785.5M750.5 754.5L788.5 773.5L750.5 792.5ZM752.5 763.5L758.5 763.5M752.5 783.5L758.5 783.5M755.5 780.5L755.5 785.5M769.5 754.5L769.5 763.5M769.5 792.5L769.5 783.5M771.5 761.5L777.5 761.5M774.5 758.5L774.5 764.5M771.5 785.5L777.5 785.5M36.5 830.5L36.5 835.5M36.5 873.5L36.5 878.5M34.5 840.5L39.5 840.5M36.5 838.5L36.5 843.5M34.5 868.5L39.5 868.5M455.5 668.5L455.5 673.5M455.5 711.5L455.5 716.5M453.5 678.5L458.5 678.5M455.5 676.5L455.5 681.5M453.5 706.5L458.5 706.5M436.5 887.5L436.5 892.5M436.5 930.5L436.5 935.5M434.5 897.5L439.5 897.5M436.5 895.5L436.5 900.5M434.5 925.5L439.5 925.5M912.5 754.5L912.5 766.5M892.5 766.5L931.5 766.5M892.5 780.5L931.5 780.5M902.5 771.5L921.5 771.5L921.5 775.5L902.5 775.5ZM902.5 785.5L921.5 785.5L921.5 790.5L902.5 790.5ZM912.5 790.5L912.5 802.5M900.5 759.5L905.5 759.5M902.5 756.5L902.5 762.5M912.5 821.5L912.5 832.5M892.5 832.5L931.5 832.5M892.5 847.5L931.5 847.5M902.5 837.5L921.5 837.5L921.5 842.5L902.5 842.5ZM902.5 852.5L921.5 852.5L921.5 856.5L902.5 856.5ZM912.5 856.5L912.5 868.5M900.5 825.5L905.5 825.5M902.5 823.5L902.5 828.5M522.5 763.5L532.5 763.5M545.5 774.5L557.5 763.5L569.5 763.5M531.5 744.5L533.5 749.5M560.5 744.5L558.5 749.5M533.5 737.5L539.5 737.5M536.5 735.5L536.5 740.5M555.5 735.5L555.5 740.5M522.5 849.5L532.5 849.5M545.5 859.5L557.5 849.5L569.5 849.5M531.5 830.5L533.5 834.5M560.5 830.5L558.5 834.5M533.5 823.5L539.5 823.5M536.5 821.5L536.5 826.5M555.5 821.5L555.5 826.5"/><g stroke="#000080" shape-rendering="auto" stroke-width="1.1"><circle cx="36.5" cy="854.1" r="18.2"/><path d="M22.5 854.1a7 7 0 0 1 14 0a7 7 0 0 0 14 0"/><circle cx="455.5" cy="692.1" r="18.2"/><path d="M441.5 692.1a7 7 0 0 1 14 0a7 7 0 0 0 14 0"/><circle cx="436.5" cy="911.1" r="18.2"/><path d="M422.5 911.1a7 7 0 0 1 14 0a7 7 0 0 0 14 0"/><circle cx="545.2" cy="763.5" r="18.1"/><circle cx="535.5" cy="763.5" r="1.9"/><circle cx="543.5" cy="775.5" r="1.9"/><circle cx="545.2" cy="849.5" r="18.1"/><circle cx="535.5" cy="849.5" r="1.9"/><circle cx="543.5" cy="861.5" r="1.9"/></g><path stroke="#0000ff" stroke-linejoin="bevel" d="M36.5 830.5L36.5 773.5M36.5 773.5L198.5 773.5M93.5 773.5L93.5 763.5M246.5 773.5L284.5 773.5M36.5 878.5L36.5 935.5M36.5 935.5L436.5 935.5M436.5 935.5L436.5 944.5M284.5 754.5L274.5 754.5M274.5 754.5L274.5 735.5M274.5 735.5L417.5 735.5M417.5 735.5L417.5 763.5M417.5 763.5L464.5 763.5M322.5 763.5L341.5 763.5M341.5 763.5L341.5 735.5M274.5 811.5L312.5 811.5M360.5 811.5L369.5 811.5M360.5 811.5L360.5 840.5M360.5 840.5L369.5 840.5M417.5 811.5L426.5 811.5M426.5 811.5L426.5 849.5M407.5 849.5L464.5 849.5M369.5 859.5L360.5 859.5M360.5 859.5L360.5 935.5M436.5 887.5L436.5 811.5M436.5 811.5L531.5 811.5M531.5 811.5L531.5 830.5M455.5 668.5L531.5 668.5M531.5 668.5L531.5 744.5M455.5 716.5L455.5 725.5M560.5 744.5L560.5 706.5M560.5 706.5L569.5 706.5M569.5 706.5L569.5 716.5M560.5 830.5L560.5 802.5M560.5 802.5L569.5 802.5M569.5 802.5L569.5 811.5M512.5 763.5L522.5 763.5M512.5 849.5L522.5 849.5M569.5 763.5L598.5 763.5M569.5 849.5L579.5 849.5M579.5 849.5L579.5 763.5M588.5 763.5L588.5 687.5M588.5 725.5L598.5 725.5M636.5 725.5L683.5 725.5M636.5 687.5L645.5 687.5M645.5 687.5L645.5 773.5M645.5 773.5L636.5 773.5M598.5 783.5L588.5 783.5M588.5 783.5L588.5 887.5M588.5 887.5L579.5 887.5M579.5 887.5L579.5 897.5M731.5 725.5L759.5 725.5M740.5 687.5L740.5 763.5M740.5 763.5L750.5 763.5M740.5 687.5L759.5 687.5M798.5 687.5L845.5 687.5M807.5 725.5L817.5 725.5M817.5 687.5L817.5 773.5M817.5 773.5L788.5 773.5M750.5 783.5L740.5 783.5M740.5 783.5L740.5 802.5M617.5 754.5L912.5 754.5M893.5 754.5L893.5 744.5M617.5 792.5L617.5 868.5M617.5 868.5L912.5 868.5M769.5 792.5L769.5 868.5M902.5 868.5L902.5 897.5M902.5 897.5L883.5 897.5M912.5 802.5L912.5 821.5M912.5 811.5L874.5 811.5M874.5 811.5L874.5 840.5M425.5 944.5h22l-11 11zM444.5 725.5h22l-11 11zM558.5 716.5h22l-11 11zM558.5 811.5h22l-11 11zM568.5 897.5h22l-11 11zM729.5 802.5h22l-11 11zM863.5 840.5h22l-11 11zM274.5 800.5v22l-11 -11z"/><g fill="#0000ff"><rect x="91" y="771" width="5" height="5"/><rect x="339" y="733" width="5" height="5"/><rect x="358" y="809" width="5" height="5"/><rect x="358" y="933" width="5" height="5"/><rect x="434" y="933" width="5" height="5"/><rect x="424" y="847" width="5" height="5"/><rect x="577" y="761" width="5" height="5"/><rect x="586" y="761" width="5" height="5"/><rect x="586" y="723" width="5" height="5"/><rect x="643" y="723" width="5" height="5"/><rect x="738" y="723" width="5" height="5"/><rect x="815" y="723" width="5" height="5"/><rect x="815" y="685" width="5" height="5"/><rect x="767" y="752" width="5" height="5"/><rect x="891" y="752" width="5" height="5"/><rect x="767" y="866" width="5" height="5"/><rect x="900" y="866" width="5" height="5"/><rect x="910" y="809" width="5" height="5"/></g></g><g font-weight="bold" font-size="13.5"><text x="55.75" y="664.2" font-size="13.5" fill="#0000c0" textLength="117.5" lengthAdjust="spacingAndGlyphs">1000 samples/sec</text><text x="84" y="691.7" font-size="13.5" fill="#0000c0" textLength="62" lengthAdjust="spacingAndGlyphs">GAIN= 10</text><text x="212.75" y="687.95" font-size="13.5" fill="#000" textLength="46.75" lengthAdjust="spacingAndGlyphs">.tran .6</text><text x="253.25" y="657.95" font-size="13.5" fill="#000" textLength="215.5" lengthAdjust="spacingAndGlyphs">PULSE(0 1 10u 1n 1n 10u 1m 10k)</text><text x="257" y="972.95" font-size="13.5" fill="#000" textLength="223.5" lengthAdjust="spacingAndGlyphs">PULSE(0 1 800u 1n 1n 10u 1m 10k)</text><text x="493.25" y="639.95" font-size="13.5" fill="#000" textLength="360.75" lengthAdjust="spacingAndGlyphs">.model MYSW1 SW(Ron=1 Roff=100Meg Vt=.5 Vh=-.1)</text><text x="517.75" y="963.85" font-size="13.5" fill="#000" textLength="360" lengthAdjust="spacingAndGlyphs">.model MYSW2 SW(Ron=1 Roff=100Meg Vt=.5 Vh=-.1)</text><text x="50" y="886.65" font-size="13.5" fill="#000" textLength="131.5" lengthAdjust="spacingAndGlyphs">SINE(0 .1 3 .1 0 0 .5)</text><text x="98.25" y="763.75" font-size="13.5" fill="#000" textLength="40" lengthAdjust="spacingAndGlyphs" transform="rotate(-90 98.25 763.75)">target</text><text x="213.25" y="760.95" font-size="13.5" fill="#000" textLength="16.3" lengthAdjust="spacingAndGlyphs">R6</text><text x="214.5" y="795.45" font-size="13.5" fill="#000" textLength="14.3" lengthAdjust="spacingAndGlyphs">2k</text><text x="312" y="749.75" font-size="13.5" fill="#000" textLength="15.4" lengthAdjust="spacingAndGlyphs">U1</text><text x="328" y="798.45" font-size="13.5" fill="#000" textLength="15.8" lengthAdjust="spacingAndGlyphs">R8</text><text x="329" y="833.75" font-size="13.5" fill="#000" textLength="14" lengthAdjust="spacingAndGlyphs">2k</text><text x="402.9" y="807.65" font-size="13.5" fill="#000" textLength="15.6" lengthAdjust="spacingAndGlyphs">R7</text><text x="404" y="828.65" font-size="13.5" fill="#000" textLength="14" lengthAdjust="spacingAndGlyphs">2k</text><text x="396.2" y="866.75" font-size="13.5" fill="#000" textLength="15.6" lengthAdjust="spacingAndGlyphs">U2</text><text x="50" y="834.95" font-size="13.5" fill="#000" textLength="17" lengthAdjust="spacingAndGlyphs">V3</text><text x="470" y="672.55" font-size="13.5" fill="#000" textLength="15.75" lengthAdjust="spacingAndGlyphs">V4</text><text x="450.75" y="891.7" font-size="13.5" fill="#000" textLength="16.25" lengthAdjust="spacingAndGlyphs">V5</text><text x="478" y="750.95" font-size="13.5" fill="#000" textLength="16.5" lengthAdjust="spacingAndGlyphs">R1</text><text x="477" y="785.45" font-size="13.5" fill="#000" textLength="22" lengthAdjust="spacingAndGlyphs">10k</text><text x="478.5" y="836.7" font-size="13.5" fill="#000" textLength="16.5" lengthAdjust="spacingAndGlyphs">R2</text><text x="477" y="871.7" font-size="13.5" fill="#000" textLength="22" lengthAdjust="spacingAndGlyphs">10k</text><text x="559.5" y="679.95" font-size="13.5" fill="#000" textLength="33.75" lengthAdjust="spacingAndGlyphs">1Meg</text><text x="603.25" y="674.95" font-size="13.5" fill="#000" textLength="16.25" lengthAdjust="spacingAndGlyphs">R3</text><text x="609" y="712.95" font-size="13.5" fill="#000" textLength="15.5" lengthAdjust="spacingAndGlyphs">C2</text><text x="605.25" y="747.95" font-size="13.5" fill="#000" textLength="23.5" lengthAdjust="spacingAndGlyphs">33n</text><text x="698.25" y="712.95" font-size="13.5" fill="#000" textLength="16.25" lengthAdjust="spacingAndGlyphs">R4</text><text x="691.5" y="747.95" font-size="13.5" fill="#000" textLength="30.5" lengthAdjust="spacingAndGlyphs">100k</text><text x="770" y="674.95" font-size="13.5" fill="#000" textLength="15.25" lengthAdjust="spacingAndGlyphs">C1</text><text x="766.25" y="709.95" font-size="13.5" fill="#000" textLength="23.25" lengthAdjust="spacingAndGlyphs">33n</text><text x="793.25" y="719.95" font-size="13.5" fill="#000" textLength="16.25" lengthAdjust="spacingAndGlyphs">R5</text><text x="765.75" y="747.95" font-size="13.5" fill="#000" textLength="33.75" lengthAdjust="spacingAndGlyphs">1Meg</text><text x="845.25" y="692.2" font-size="13.5" fill="#000" textLength="7.5" lengthAdjust="spacingAndGlyphs">b</text><text x="627" y="789.95" font-size="13.5" fill="#000" textLength="15.75" lengthAdjust="spacingAndGlyphs">U3</text><text x="781.25" y="794.2" font-size="13.5" fill="#000" textLength="15.25" lengthAdjust="spacingAndGlyphs">U4</text><text x="926.4" y="758.75" font-size="13.5" fill="#000" textLength="16" lengthAdjust="spacingAndGlyphs">V1</text><text x="926.6" y="810.55" font-size="13.5" fill="#000" textLength="7" lengthAdjust="spacingAndGlyphs">5</text><text x="926.4" y="825.75" font-size="13.5" fill="#000" textLength="16.5" lengthAdjust="spacingAndGlyphs">V2</text><text x="926.6" y="877.65" font-size="13.5" fill="#000" textLength="7" lengthAdjust="spacingAndGlyphs">5</text><text x="882.2" y="901.45" font-size="13.5" fill="#000" text-anchor="end" textLength="12.3" lengthAdjust="spacingAndGlyphs">-v</text><text x="898" y="743.15" font-size="13.5" fill="#000" textLength="15.8" lengthAdjust="spacingAndGlyphs" transform="rotate(-90 898 743.15)">+v</text><text x="308" y="742.95" font-size="13.5" fill="#000" textLength="16" lengthAdjust="spacingAndGlyphs" transform="rotate(-90 308 742.95)">+v</text><text x="308" y="796.45" font-size="13.5" fill="#000" textLength="13.5" lengthAdjust="spacingAndGlyphs" transform="rotate(-90 308 796.45)">-v</text><text x="393" y="827.45" font-size="13.5" fill="#000" textLength="16" lengthAdjust="spacingAndGlyphs" transform="rotate(-90 393 827.45)">+v</text><text x="393" y="880.95" font-size="13.5" fill="#000" textLength="13.5" lengthAdjust="spacingAndGlyphs" transform="rotate(-90 393 880.95)">-v</text><text x="528" y="828.45" font-size="13.5" fill="#000" textLength="50" lengthAdjust="spacingAndGlyphs" transform="rotate(-90 528 828.45)">MYSW1</text><text x="575" y="793.95" font-size="13.5" fill="#000" textLength="15" lengthAdjust="spacingAndGlyphs" transform="rotate(-90 575 793.95)">S1</text><text x="528" y="914.2" font-size="13.5" fill="#000" textLength="50" lengthAdjust="spacingAndGlyphs" transform="rotate(-90 528 914.2)">MYSW2</text><text x="575" y="879.2" font-size="13.5" fill="#000" textLength="15" lengthAdjust="spacingAndGlyphs" transform="rotate(-90 575 879.2)">S2</text></g>
</svg>
</svg></body></html>
